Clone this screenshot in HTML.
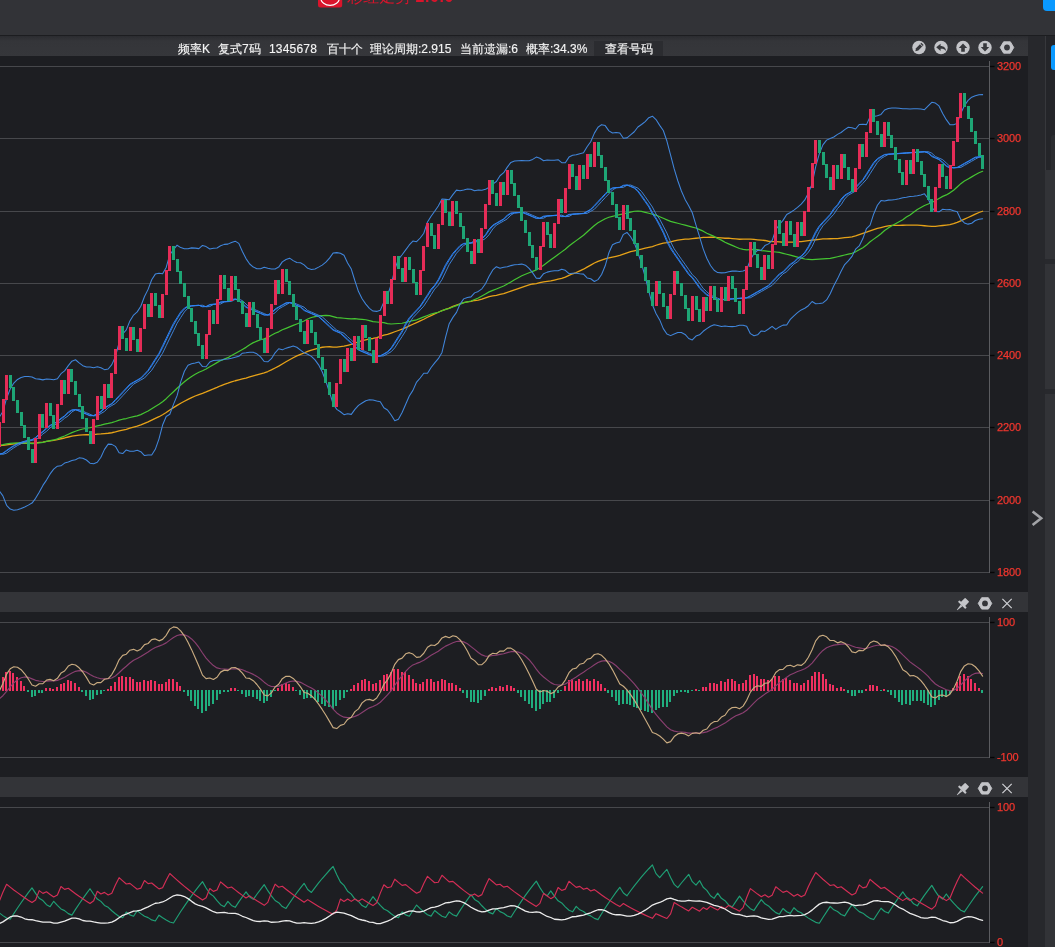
<!DOCTYPE html>
<html><head><meta charset="utf-8"><title>K</title>
<style>
html,body{margin:0;padding:0;width:1055px;height:947px;overflow:hidden;background:#1d1e22;font-family:"Liberation Sans",sans-serif;}
div{position:absolute;box-sizing:border-box}
#top{left:0;top:0;width:1055px;height:35px;background:#323337}
#topline{left:0;top:35px;width:1055px;height:1px;background:#1c1d20}
#tool{left:0;top:36px;width:1028px;height:20px;background:linear-gradient(to bottom,#2b2c30 0px,#343539 5px,#36373b 20px)}
.hd{left:0;width:1028px;height:20px;background:#333438}
#col{left:1028px;top:36px;width:17px;height:911px;background:#27282c}
#side{left:1045px;top:36px;width:10px;height:911px;background:#323337}
#sidetop{left:1045px;top:36px;width:10px;height:134px;background:#242529;border-left:1px solid #37383c}
#sidebox{left:1051px;top:135px;width:8px;height:35px;background:#2b2c30;border-radius:3px 0 0 0}
.sep{left:1045px;width:10px;height:5px;background:#28292d}
.blue{background:#0a99ff}
.t{color:#f4f4f4;-webkit-text-stroke:0.15px #f4f4f4;font-size:12px;line-height:14px;top:42px;white-space:nowrap;will-change:transform}
.ax{color:#f0362e;-webkit-text-stroke:0.25px #f0362e;font-size:11px;line-height:12px;left:996.8px;white-space:nowrap;letter-spacing:-0.15px;will-change:transform}
#btn{left:594px;top:41px;width:69px;height:15px;background:#2b2c30}
#brand{will-change:transform;left:347px;top:-12px;color:#d9142b;font-size:16px;line-height:18px;white-space:nowrap}
svg{position:absolute;left:0;top:0}
</style></head><body>
<div id="top"></div><div id="topline"></div><div id="tool"></div>
<div class="hd" style="top:592px"></div><div class="hd" style="top:777px"></div>
<div id="col"></div><div id="side"></div><div id="sidetop"></div><div id="sidebox"></div>
<div class="sep" style="top:259px"></div><div class="sep" style="top:389px"></div>
<div class="blue" style="left:1043px;top:-4px;width:16px;height:15px;border-radius:4px"></div>
<div class="blue" style="left:1051px;top:45px;width:8px;height:25px;border-radius:3px"></div>
<div id="btn"></div>
<div id="brand">彩红走势 <b style="letter-spacing:0.6px">2.0.0</b></div>
<div class="t" style="left:178px">频率K</div>
<div class="t" style="left:217.8px">复式7码</div>
<div class="t" style="left:269px;letter-spacing:0.2px">1345678</div>
<div class="t" style="left:327px">百十个</div>
<div class="t" style="left:370px">理论周期:2.915</div>
<div class="t" style="left:460px">当前遗漏:6</div>
<div class="t" style="left:526px">概率:34.3%</div>
<div class="t" style="left:605px">查看号码</div>
<div class="ax" style="top:60px">3200</div>
<div class="ax" style="top:132px">3000</div>
<div class="ax" style="top:205px">2800</div>
<div class="ax" style="top:277px">2600</div>
<div class="ax" style="top:349px">2400</div>
<div class="ax" style="top:421px">2200</div>
<div class="ax" style="top:494px">2000</div>
<div class="ax" style="top:566px">1800</div>
<div class="ax" style="top:616px">100</div>
<div class="ax" style="top:751px">-100</div>
<div class="ax" style="top:801px">100</div>
<div class="ax" style="top:936px">0</div>
<svg width="1055" height="947" viewBox="0 0 1055 947">
<rect x="0" y="66" width="990" height="1" fill="#47484c"/>
<rect x="990" y="65.8" width="4.5" height="1.4" fill="#050506"/>
<rect x="0" y="138" width="990" height="1" fill="#47484c"/>
<rect x="990" y="137.8" width="4.5" height="1.4" fill="#050506"/>
<rect x="0" y="211" width="990" height="1" fill="#47484c"/>
<rect x="990" y="210.8" width="4.5" height="1.4" fill="#050506"/>
<rect x="0" y="283" width="990" height="1" fill="#47484c"/>
<rect x="990" y="282.8" width="4.5" height="1.4" fill="#050506"/>
<rect x="0" y="355" width="990" height="1" fill="#47484c"/>
<rect x="990" y="354.8" width="4.5" height="1.4" fill="#050506"/>
<rect x="0" y="427" width="990" height="1" fill="#47484c"/>
<rect x="990" y="426.8" width="4.5" height="1.4" fill="#050506"/>
<rect x="0" y="500" width="990" height="1" fill="#47484c"/>
<rect x="990" y="499.8" width="4.5" height="1.4" fill="#050506"/>
<rect x="0" y="572" width="990" height="1" fill="#47484c"/>
<rect x="990" y="571.8" width="4.5" height="1.4" fill="#050506"/>
<rect x="989" y="61" width="1" height="512" fill="#5b5c60"/>
<polyline points="-0.7,445.68 2.9,445.42 6.6,444.85 10.2,444.36 13.8,443.95 17.5,443.63 21.1,443.39 24.7,443.24 28.3,443.19 32.0,443.23 35.6,442.98 39.2,442.44 42.9,442.03 46.5,441.33 50.1,440.77 53.7,440.35 57.4,439.67 61.0,438.75 64.6,437.99 68.3,437.00 71.9,436.19 75.5,435.55 79.1,435.09 82.8,434.80 86.4,434.68 90.0,434.74 93.7,434.58 97.3,434.19 100.9,433.97 104.5,433.53 108.2,433.25 111.8,432.74 115.4,431.98 119.1,430.95 122.7,430.06 126.3,429.27 129.9,428.17 133.6,427.15 137.2,426.22 140.8,424.95 144.5,423.37 148.1,421.87 151.7,420.06 155.3,418.34 159.0,416.71 162.6,414.79 166.2,412.57 169.8,410.06 173.5,407.67 177.1,405.41 180.7,403.26 184.4,401.24 188.0,399.34 191.6,397.59 195.2,395.99 198.9,394.56 202.5,393.33 206.1,391.91 209.8,390.32 213.4,388.95 217.0,387.44 220.6,385.77 224.3,384.37 227.9,383.21 231.5,381.88 235.2,380.75 238.8,379.77 242.4,378.91 246.0,378.12 249.7,376.98 253.3,375.87 256.9,374.81 260.6,373.79 264.2,372.83 267.8,371.53 271.4,369.92 275.1,368.00 278.7,366.16 282.3,363.97 286.0,361.81 289.6,359.70 293.2,357.73 296.8,355.95 300.5,354.38 304.1,353.00 307.7,351.44 311.4,350.13 315.0,349.04 318.6,348.11 322.2,347.25 325.9,346.80 329.5,346.74 333.1,347.09 336.8,347.04 340.4,346.59 344.0,346.13 347.6,345.28 351.3,344.42 354.9,343.17 358.5,341.91 362.1,340.65 365.8,339.80 369.4,338.94 373.0,338.49 376.7,337.63 380.3,336.38 383.9,335.12 387.5,334.26 391.2,333.01 394.8,331.75 398.4,330.49 402.1,329.24 405.7,327.58 409.3,325.92 412.9,324.26 416.6,322.60 420.2,320.94 423.8,319.28 427.5,317.22 431.1,315.57 434.7,313.91 438.3,312.25 442.0,310.59 445.6,309.33 449.2,308.08 452.9,306.42 456.5,305.16 460.1,303.90 463.7,302.65 467.4,301.79 471.0,301.34 474.6,300.48 478.3,300.03 481.9,299.17 485.5,297.92 489.1,296.66 492.8,295.80 496.4,295.35 500.0,294.49 503.7,293.64 507.3,292.38 510.9,291.12 514.5,289.87 518.2,288.61 521.8,287.35 525.4,286.10 529.1,284.84 532.7,283.98 536.3,283.53 539.9,282.68 543.6,281.82 547.2,281.37 550.8,280.91 554.4,280.06 558.1,279.20 561.7,278.35 565.3,277.09 569.0,275.43 572.6,273.77 576.2,272.52 579.8,270.86 583.5,269.20 587.1,267.14 590.7,265.08 594.4,263.02 598.0,261.36 601.6,260.10 605.2,258.85 608.9,257.99 612.5,257.13 616.1,256.28 619.8,255.42 623.4,254.17 627.0,252.91 630.6,251.65 634.3,250.80 637.9,249.94 641.5,249.09 645.2,248.23 648.8,247.38 652.4,246.52 656.0,245.26 659.7,244.01 663.3,243.15 666.9,242.70 670.6,241.84 674.2,240.99 677.8,240.13 681.4,239.68 685.1,239.22 688.7,239.17 692.3,238.72 696.0,238.26 699.6,237.81 703.2,237.36 706.8,237.30 710.5,237.25 714.1,237.20 717.7,237.55 721.4,237.90 725.0,238.25 728.6,238.20 732.2,238.54 735.9,238.89 739.5,239.24 743.1,239.19 746.7,239.14 750.4,239.09 754.0,239.44 757.6,239.79 761.3,240.14 764.9,240.48 768.5,241.24 772.1,241.58 775.8,241.53 779.4,241.88 783.0,242.23 786.7,242.18 790.3,242.13 793.9,242.07 797.5,241.62 801.2,241.57 804.8,241.11 808.4,240.66 812.1,240.21 815.7,239.75 819.3,239.30 822.9,238.85 826.6,238.79 830.2,238.74 833.8,238.69 837.5,238.64 841.1,238.18 844.7,237.73 848.3,237.28 852.0,236.82 855.6,235.97 859.2,234.71 862.9,233.45 866.5,232.20 870.1,230.94 873.7,229.68 877.4,228.42 881.0,227.57 884.6,226.71 888.3,225.86 891.9,225.40 895.5,225.35 899.1,225.30 902.8,225.25 906.4,225.20 910.0,225.14 913.6,225.09 917.3,225.04 920.9,225.39 924.5,225.74 928.2,226.09 931.8,226.44 935.4,226.38 939.0,225.93 942.7,225.48 946.3,225.02 949.9,224.57 953.6,223.71 957.2,222.46 960.8,220.80 964.4,219.14 968.1,217.48 971.7,215.82 975.3,214.16 979.0,212.51 982.6,211.25" fill="none" stroke="#e6a218" stroke-width="1.3" stroke-linejoin="round" stroke-linecap="round" opacity="1"/>
<polyline points="-0.7,444.97 2.9,444.63 6.6,443.92 10.2,443.41 13.8,443.10 17.5,442.94 21.1,442.93 24.7,443.04 28.3,443.26 32.0,443.61 35.6,443.46 39.2,442.85 42.9,442.36 46.5,441.41 50.1,440.61 53.7,439.96 57.4,438.86 61.0,437.34 64.6,435.99 68.3,434.22 71.9,432.64 75.5,431.23 79.1,430.02 82.8,429.02 86.4,428.25 90.0,427.75 93.7,426.94 97.3,425.84 100.9,425.07 104.5,424.06 108.2,423.42 111.8,422.56 115.4,421.48 119.1,420.17 122.7,419.21 126.3,418.54 129.9,417.50 133.6,416.63 137.2,415.87 140.8,414.59 144.5,412.76 148.1,410.99 151.7,408.68 155.3,406.47 159.0,404.34 162.6,401.74 166.2,398.69 169.8,395.16 173.5,391.70 177.1,388.29 180.7,384.95 184.4,381.81 188.0,378.97 191.6,376.44 195.2,374.20 198.9,372.29 202.5,370.74 206.1,368.94 209.8,366.76 213.4,364.70 217.0,362.64 220.6,360.58 224.3,359.12 227.9,357.66 231.5,355.60 235.2,353.54 238.8,351.48 242.4,349.42 246.0,347.36 249.7,344.70 253.3,342.64 256.9,341.18 260.6,339.72 264.2,338.87 267.8,337.41 271.4,335.35 275.1,333.29 278.7,331.83 282.3,329.77 286.0,328.32 289.6,326.86 293.2,325.40 296.8,323.94 300.5,322.48 304.1,321.03 307.7,318.97 311.4,317.51 315.0,316.65 318.6,315.80 322.2,315.55 325.9,315.29 329.5,315.64 333.1,316.59 336.8,317.55 340.4,317.89 344.0,318.24 347.6,318.59 351.3,318.94 354.9,318.69 358.5,319.04 362.1,319.39 365.8,319.74 369.4,320.69 373.0,321.64 376.7,321.99 380.3,322.34 383.9,322.69 387.5,323.64 391.2,323.99 394.8,323.74 398.4,323.48 402.1,323.23 405.7,322.38 409.3,321.52 412.9,320.67 416.6,319.81 420.2,318.35 423.8,316.89 427.5,315.44 431.1,313.98 434.7,313.12 438.3,312.27 442.0,310.81 445.6,309.35 449.2,308.50 452.9,307.04 456.5,305.58 460.1,304.12 463.7,302.67 467.4,301.81 471.0,300.96 474.6,299.50 478.3,298.04 481.9,295.98 485.5,293.92 489.1,291.86 492.8,290.40 496.4,288.94 500.0,287.49 503.7,286.03 507.3,283.97 510.9,281.91 514.5,279.85 518.2,277.79 521.8,275.73 525.4,274.27 529.1,272.81 532.7,271.35 536.3,269.90 539.9,267.84 543.6,265.17 547.2,262.51 550.8,259.85 554.4,257.19 558.1,254.52 561.7,251.86 565.3,249.20 569.0,245.93 572.6,243.27 576.2,240.61 579.8,237.95 583.5,235.28 587.1,232.02 590.7,228.75 594.4,225.49 598.0,222.83 601.6,220.77 605.2,218.71 608.9,217.25 612.5,216.39 616.1,215.54 619.8,214.68 623.4,213.83 627.0,212.97 630.6,212.12 634.3,211.26 637.9,211.01 641.5,211.36 645.2,212.31 648.8,213.26 652.4,214.21 656.0,215.16 659.7,216.72 663.3,218.27 666.9,219.83 670.6,221.38 674.2,222.33 677.8,223.28 681.4,224.24 685.1,225.19 688.7,226.14 692.3,227.09 696.0,228.04 699.6,229.60 703.2,231.15 706.8,233.31 710.5,234.86 714.1,236.42 717.7,238.57 721.4,240.13 725.0,242.28 728.6,243.84 732.2,245.39 735.9,246.95 739.5,248.50 743.1,249.45 746.7,249.80 750.4,249.55 754.0,249.30 757.6,249.64 761.3,250.60 764.9,250.95 768.5,251.30 772.1,251.64 775.8,251.99 779.4,252.34 783.0,253.30 786.7,254.25 790.3,255.20 793.9,256.15 797.5,257.10 801.2,258.05 804.8,259.01 808.4,259.36 812.1,259.70 815.7,259.45 819.3,259.20 822.9,258.95 826.6,258.69 830.2,258.44 833.8,257.58 837.5,256.73 841.1,255.87 844.7,255.02 848.3,254.16 852.0,253.31 855.6,251.85 859.2,249.79 862.9,247.73 866.5,245.07 870.1,241.80 873.7,239.14 877.4,236.48 881.0,233.81 884.6,230.55 888.3,227.89 891.9,225.83 895.5,223.77 899.1,221.71 902.8,219.65 906.4,216.98 910.0,214.92 913.6,212.26 917.3,209.60 920.9,207.54 924.5,205.48 928.2,204.02 931.8,202.56 935.4,200.50 939.0,198.44 942.7,196.38 946.3,194.92 949.9,192.86 953.6,190.20 957.2,186.94 960.8,183.67 964.4,181.01 968.1,178.95 971.7,176.89 975.3,174.83 979.0,172.77 982.6,171.31" fill="none" stroke="#45c532" stroke-width="1.2" stroke-linejoin="round" stroke-linecap="round" opacity="1"/>
<polyline points="-0.7,417.21 2.9,411.58 6.6,398.19 10.2,389.05 13.8,383.10 17.5,379.44 21.1,377.43 24.7,376.57 28.3,376.49 32.0,376.99 35.6,378.78 39.2,379.12 42.9,379.87 46.5,379.06 50.1,379.15 53.7,379.73 57.4,378.76 61.0,373.68 64.6,370.89 68.3,365.67 71.9,361.18 75.5,359.75 79.1,362.94 82.8,365.69 86.4,367.00 90.0,366.90 93.7,367.68 97.3,366.83 100.9,367.67 104.5,369.66 108.2,369.00 111.8,364.63 115.4,356.72 119.1,342.51 122.7,334.02 126.3,329.92 129.9,320.91 133.6,315.04 137.2,311.90 140.8,306.27 144.5,296.51 148.1,289.37 151.7,279.78 155.3,274.11 159.0,273.25 162.6,273.84 166.2,267.44 169.8,254.70 173.5,249.63 177.1,245.20 180.7,247.59 184.4,248.70 188.0,248.72 191.6,247.87 195.2,248.14 198.9,248.64 202.5,245.45 206.1,246.61 209.8,249.03 213.4,248.24 217.0,247.94 220.6,245.73 224.3,244.37 227.9,244.13 231.5,242.46 235.2,241.16 238.8,243.38 242.4,251.50 246.0,258.58 249.7,264.00 253.3,267.10 256.9,268.66 260.6,268.66 264.2,267.26 267.8,268.24 271.4,269.03 275.1,268.97 278.7,267.09 282.3,261.87 286.0,259.47 289.6,258.17 293.2,260.62 296.8,262.44 300.5,262.69 304.1,264.87 307.7,268.36 311.4,269.40 315.0,268.93 318.6,267.15 322.2,265.09 325.9,262.21 329.5,258.09 333.1,253.10 336.8,252.64 340.4,253.33 344.0,255.33 347.6,262.92 351.3,269.07 354.9,280.77 358.5,291.55 362.1,298.75 365.8,304.11 369.4,308.29 373.0,311.09 376.7,311.39 380.3,310.27 383.9,301.86 387.5,295.48 391.2,284.53 394.8,269.28 398.4,259.39 402.1,254.75 405.7,249.91 409.3,244.94 412.9,241.10 416.6,241.67 420.2,238.00 423.8,233.23 427.5,221.93 431.1,216.25 434.7,211.30 438.3,205.99 442.0,199.05 445.6,199.37 449.2,199.69 452.9,194.68 456.5,190.14 460.1,190.78 463.7,189.96 467.4,188.99 471.0,189.16 474.6,190.84 478.3,189.96 481.9,190.29 485.5,189.35 489.1,187.26 492.8,184.09 496.4,181.48 500.0,175.73 503.7,172.71 507.3,167.16 510.9,162.43 514.5,160.98 518.2,160.67 521.8,160.61 525.4,160.83 529.1,160.69 532.7,159.40 536.3,157.12 539.9,158.27 543.6,160.69 547.2,159.91 550.8,160.26 554.4,160.19 558.1,159.69 561.7,162.61 565.3,162.77 569.0,157.09 572.6,155.33 576.2,154.69 579.8,153.66 583.5,152.84 587.1,146.73 590.7,141.78 594.4,133.14 598.0,127.22 601.6,124.65 605.2,125.60 608.9,130.91 612.5,133.05 616.1,132.47 619.8,133.03 623.4,138.27 627.0,137.86 630.6,134.85 634.3,131.77 637.9,127.04 641.5,124.53 645.2,121.58 648.8,117.66 652.4,116.21 656.0,119.55 659.7,125.36 663.3,130.54 666.9,141.01 670.6,155.10 674.2,168.96 677.8,180.74 681.4,191.00 685.1,199.41 688.7,205.69 692.3,212.76 696.0,225.19 699.6,236.79 703.2,248.87 706.8,258.27 710.5,265.53 714.1,270.21 717.7,272.60 721.4,272.87 725.0,272.72 728.6,271.69 732.2,271.14 735.9,271.05 739.5,271.44 743.1,270.95 746.7,269.60 750.4,259.77 754.0,253.52 757.6,250.38 761.3,250.13 764.9,245.56 768.5,243.85 772.1,240.56 775.8,229.76 779.4,224.51 783.0,220.40 786.7,214.57 790.3,212.51 793.9,210.10 797.5,207.41 801.2,204.16 804.8,199.89 808.4,192.89 812.1,183.97 815.7,166.71 819.3,153.84 822.9,144.89 826.6,140.14 830.2,138.58 833.8,137.05 837.5,134.38 841.1,132.51 844.7,129.57 848.3,127.28 852.0,127.71 855.6,129.02 859.2,124.46 862.9,124.15 866.5,124.64 870.1,116.64 873.7,116.55 877.4,115.66 881.0,114.39 884.6,109.98 888.3,108.44 891.9,108.09 895.5,108.02 899.1,108.23 902.8,108.73 906.4,108.70 910.0,108.96 913.6,108.69 917.3,108.71 920.9,109.03 924.5,109.66 928.2,105.99 931.8,102.31 935.4,103.09 939.0,105.90 942.7,113.41 946.3,119.65 949.9,124.67 953.6,124.75 957.2,123.38 960.8,113.34 964.4,105.68 968.1,100.41 971.7,97.16 975.3,95.81 979.0,94.67 982.6,94.63" fill="none" stroke="#4086dc" stroke-width="1.05" stroke-linejoin="round" stroke-linecap="round" opacity="1"/>
<polyline points="-0.7,491.01 2.9,495.87 6.6,505.27 10.2,509.10 13.8,510.27 17.5,509.81 21.1,508.52 24.7,506.91 28.3,505.10 32.0,503.06 35.6,498.31 39.2,492.21 42.9,485.38 46.5,480.10 50.1,473.92 53.7,469.14 57.4,466.19 61.0,465.85 64.6,463.12 68.3,462.05 71.9,460.61 75.5,459.73 79.1,457.84 82.8,458.20 86.4,459.99 90.0,463.21 93.7,463.73 97.3,462.26 100.9,457.30 104.5,449.39 108.2,444.11 111.8,444.36 115.4,446.35 119.1,452.83 122.7,453.58 126.3,449.95 129.9,451.22 133.6,451.16 137.2,450.19 140.8,451.70 144.5,455.53 148.1,454.93 151.7,454.98 155.3,449.30 159.0,438.81 162.6,425.06 166.2,416.50 169.8,414.28 173.5,404.39 177.1,395.66 180.7,381.92 184.4,371.27 188.0,365.32 191.6,363.86 195.2,363.09 198.9,362.08 202.5,366.56 206.1,366.71 209.8,361.98 213.4,360.45 217.0,360.25 220.6,360.14 224.3,359.19 227.9,358.92 231.5,358.28 235.2,357.27 238.8,356.35 242.4,353.15 246.0,352.79 249.7,352.29 253.3,352.29 256.9,353.84 260.6,356.95 264.2,361.46 267.8,361.78 271.4,358.67 275.1,352.81 278.7,348.76 282.3,349.86 286.0,348.14 289.6,347.13 293.2,345.97 296.8,347.26 300.5,350.12 304.1,352.86 307.7,354.28 311.4,356.36 315.0,359.93 318.6,364.82 322.2,371.79 325.9,381.39 329.5,392.24 333.1,403.95 336.8,409.33 340.4,411.74 344.0,414.66 347.6,413.79 351.3,414.36 354.9,409.38 358.5,405.33 362.1,403.05 365.8,400.80 369.4,399.73 373.0,400.03 376.7,401.03 380.3,401.65 383.9,407.74 387.5,410.00 391.2,415.03 394.8,420.73 398.4,419.27 402.1,412.57 405.7,404.25 409.3,396.07 412.9,390.36 416.6,382.06 420.2,377.99 423.8,373.22 427.5,373.18 431.1,367.50 434.7,362.92 438.3,358.69 442.0,352.46 445.6,337.18 449.2,323.71 452.9,317.37 456.5,312.37 460.1,303.99 463.7,298.88 467.4,297.54 471.0,296.87 474.6,292.87 478.3,291.44 481.9,288.80 485.5,283.80 489.1,276.35 492.8,269.98 496.4,266.67 500.0,268.30 503.7,267.19 507.3,266.82 510.9,265.62 514.5,264.76 518.2,264.56 521.8,264.12 525.4,265.20 529.1,268.45 532.7,272.85 536.3,278.23 539.9,278.38 543.6,273.65 547.2,272.12 550.8,271.26 554.4,270.82 558.1,270.82 561.7,269.20 565.3,270.34 569.0,273.70 572.6,273.16 576.2,273.29 579.8,273.82 583.5,274.13 587.1,277.92 590.7,278.75 594.4,281.47 598.0,279.65 601.6,274.49 605.2,265.80 608.9,252.76 612.5,244.69 616.1,242.96 619.8,241.89 623.4,234.34 627.0,232.43 630.6,236.74 634.3,242.94 637.9,252.58 641.5,263.62 645.2,276.91 648.8,291.17 652.4,304.76 656.0,313.57 659.7,319.90 663.3,328.67 666.9,333.95 670.6,335.62 674.2,333.91 677.8,332.47 681.4,332.54 685.1,334.47 688.7,338.52 692.3,339.98 696.0,336.09 699.6,334.82 703.2,331.28 706.8,328.59 710.5,326.25 714.1,324.68 717.7,325.40 721.4,326.43 725.0,326.07 728.6,326.59 732.2,326.64 735.9,326.22 739.5,325.33 743.1,325.31 746.7,326.15 750.4,333.67 754.0,335.81 757.6,334.82 761.3,330.95 764.9,331.40 768.5,328.99 772.1,326.35 775.8,329.42 779.4,326.93 783.0,325.12 786.7,325.02 790.3,319.35 793.9,315.82 797.5,312.59 801.2,309.91 804.8,308.25 808.4,305.71 812.1,301.48 815.7,303.77 819.3,303.49 822.9,302.90 826.6,299.91 830.2,293.73 833.8,285.72 837.5,278.85 841.1,271.18 844.7,264.58 848.3,260.95 852.0,256.39 855.6,249.16 859.2,245.98 862.9,238.56 866.5,228.53 870.1,225.17 873.7,213.92 877.4,205.26 881.0,200.60 884.6,200.90 888.3,200.12 891.9,199.97 895.5,199.53 899.1,198.82 902.8,197.81 906.4,197.33 910.0,196.56 913.6,196.33 917.3,195.81 920.9,194.98 924.5,193.85 928.2,198.81 931.8,207.41 935.4,211.55 939.0,211.85 942.7,209.25 946.3,209.73 949.9,209.62 953.6,210.85 957.2,211.71 960.8,219.44 964.4,222.98 968.1,224.13 971.7,223.26 975.3,220.49 979.0,219.32 982.6,218.85" fill="none" stroke="#4086dc" stroke-width="1.05" stroke-linejoin="round" stroke-linecap="round" opacity="1"/>
<polyline points="-0.7,453.89 2.9,454.33 6.6,453.13 10.2,450.34 13.8,447.81 17.5,445.56 21.1,443.69 24.7,442.27 28.3,441.21 32.0,440.38 35.6,439.68 39.2,437.41 42.9,433.92 46.5,431.33 50.1,427.84 53.7,425.24 57.4,423.64 61.0,421.31 64.6,418.22 68.3,415.79 71.9,411.93 75.5,409.87 79.1,409.61 82.8,411.17 86.4,412.72 90.0,414.28 93.7,415.83 97.3,415.58 100.9,413.52 104.5,411.46 108.2,407.59 111.8,405.53 115.4,403.47 119.1,399.60 122.7,395.73 126.3,391.87 129.9,388.00 133.6,384.13 137.2,382.07 140.8,380.01 144.5,377.95 148.1,374.08 151.7,370.22 155.3,364.54 159.0,358.87 162.6,353.19 166.2,345.71 169.8,338.23 173.5,330.75 177.1,323.27 180.7,317.59 184.4,311.92 188.0,308.05 191.6,305.99 195.2,305.74 198.9,305.49 202.5,305.23 206.1,306.79 209.8,306.53 213.4,304.47 217.0,304.22 220.6,303.97 224.3,301.91 227.9,301.65 231.5,301.40 235.2,299.34 238.8,299.09 242.4,300.64 246.0,304.00 249.7,307.36 253.3,308.92 256.9,310.47 260.6,312.03 264.2,313.58 267.8,315.14 271.4,314.88 275.1,312.82 278.7,308.96 282.3,306.89 286.0,304.83 289.6,302.77 293.2,302.52 296.8,304.08 300.5,305.63 304.1,307.18 307.7,310.55 311.4,312.10 315.0,313.65 318.6,315.21 322.2,316.76 325.9,320.12 329.5,323.48 333.1,326.85 336.8,330.21 340.4,331.76 344.0,333.32 347.6,336.68 351.3,340.04 354.9,343.40 358.5,346.76 362.1,350.12 365.8,351.68 369.4,353.23 373.0,354.78 376.7,356.34 380.3,356.09 383.9,355.83 387.5,353.77 391.2,351.71 394.8,347.84 398.4,342.17 402.1,336.50 405.7,330.82 409.3,323.34 412.9,317.67 416.6,313.80 420.2,309.93 423.8,306.06 427.5,300.39 431.1,294.71 434.7,289.04 438.3,285.17 442.0,279.50 445.6,272.02 449.2,264.54 452.9,258.86 456.5,253.19 460.1,249.32 463.7,245.45 467.4,243.39 471.0,243.14 474.6,242.89 478.3,240.83 481.9,240.57 485.5,238.51 489.1,234.65 492.8,228.97 496.4,225.10 500.0,223.04 503.7,220.98 507.3,218.92 510.9,215.06 514.5,213.00 518.2,212.74 521.8,212.49 525.4,212.24 529.1,213.79 532.7,215.35 536.3,216.90 539.9,218.45 543.6,218.20 547.2,216.14 550.8,215.89 554.4,215.63 558.1,215.38 561.7,215.13 565.3,216.68 569.0,216.43 572.6,214.37 576.2,214.12 579.8,213.86 583.5,213.61 587.1,213.36 590.7,211.30 594.4,209.24 598.0,205.37 601.6,201.50 605.2,197.64 608.9,193.77 612.5,189.90 616.1,187.84 619.8,187.59 623.4,187.33 627.0,185.27 630.6,185.02 634.3,186.58 637.9,188.13 641.5,191.49 645.2,196.66 648.8,201.83 652.4,207.00 656.0,213.97 659.7,219.14 663.3,226.12 666.9,233.09 670.6,241.87 674.2,248.85 677.8,254.02 681.4,259.19 685.1,264.35 688.7,269.52 692.3,274.69 696.0,278.05 699.6,283.22 703.2,288.39 706.8,291.75 710.5,295.11 714.1,296.67 717.7,298.22 721.4,299.77 725.0,299.52 728.6,299.27 732.2,299.02 735.9,298.76 739.5,298.51 743.1,298.26 746.7,298.00 750.4,297.75 754.0,295.69 757.6,293.63 761.3,291.57 764.9,289.51 768.5,287.45 772.1,285.39 775.8,281.52 779.4,277.66 783.0,273.79 786.7,271.73 790.3,267.86 793.9,263.99 797.5,261.93 801.2,258.07 804.8,256.01 808.4,252.14 812.1,246.46 815.7,238.98 819.3,231.50 822.9,225.83 826.6,221.96 830.2,218.09 833.8,214.22 837.5,208.55 841.1,204.68 844.7,199.01 848.3,195.14 852.0,193.08 855.6,191.02 859.2,187.15 862.9,183.29 866.5,179.42 870.1,173.74 873.7,168.07 877.4,162.40 881.0,158.53 884.6,156.47 888.3,154.41 891.9,154.16 895.5,153.90 899.1,153.65 902.8,153.40 906.4,153.14 910.0,152.89 913.6,152.64 917.3,152.38 920.9,152.13 924.5,151.88 928.2,151.63 931.8,153.18 935.4,156.54 939.0,158.09 942.7,159.65 946.3,163.01 949.9,166.37 953.6,167.93 957.2,167.67 960.8,167.42 964.4,165.36 968.1,163.30 971.7,161.24 975.3,159.18 979.0,157.12 982.6,156.87" fill="none" stroke="#4086dc" stroke-width="0.95" stroke-linejoin="round" stroke-linecap="round" opacity="1"/>
<polyline points="-0.7,454.22 2.9,453.43 6.6,451.03 10.2,448.44 13.8,446.12 17.5,444.16 21.1,442.62 24.7,441.47 28.3,440.59 32.0,439.85 35.6,437.98 39.2,434.79 42.9,431.98 46.5,428.71 50.1,425.89 53.7,424.04 57.4,421.89 61.0,418.99 64.6,416.40 68.3,412.89 71.9,410.38 75.5,409.68 79.1,410.78 82.8,412.33 86.4,413.89 90.0,415.44 93.7,415.64 97.3,414.03 100.9,411.97 104.5,408.56 108.2,406.04 111.8,403.98 115.4,400.57 119.1,396.70 122.7,392.83 126.3,388.97 129.9,385.10 133.6,382.59 137.2,380.53 140.8,378.47 144.5,375.05 148.1,371.18 151.7,365.96 155.3,360.29 159.0,354.61 162.6,347.58 166.2,340.10 169.8,332.62 173.5,325.14 177.1,319.01 180.7,313.34 184.4,309.02 188.0,306.51 191.6,305.80 195.2,305.55 198.9,305.30 202.5,306.40 206.1,306.60 209.8,304.99 213.4,304.28 217.0,304.03 220.6,302.42 224.3,301.72 227.9,301.46 231.5,299.86 235.2,299.15 238.8,300.25 242.4,303.16 246.0,306.52 249.7,308.53 253.3,310.08 256.9,311.64 260.6,313.19 264.2,314.75 267.8,314.95 271.4,313.34 275.1,309.92 278.7,307.41 282.3,305.35 286.0,303.29 289.6,302.58 293.2,303.69 296.8,305.24 300.5,306.80 304.1,309.71 307.7,311.71 311.4,313.27 315.0,314.82 318.6,316.37 322.2,319.28 325.9,322.64 329.5,326.01 333.1,329.37 336.8,331.37 340.4,332.93 344.0,335.84 347.6,339.20 351.3,342.56 354.9,345.92 358.5,349.28 362.1,351.29 365.8,352.84 369.4,354.40 373.0,355.95 376.7,356.15 380.3,355.90 383.9,354.29 387.5,352.23 391.2,348.81 394.8,343.59 398.4,337.91 402.1,332.24 405.7,325.21 409.3,319.08 412.9,314.77 416.6,310.90 420.2,307.03 423.8,301.81 427.5,296.13 431.1,290.46 434.7,286.14 438.3,280.92 442.0,273.89 445.6,266.41 449.2,260.28 452.9,254.61 456.5,250.29 460.1,246.42 463.7,243.91 467.4,243.20 471.0,242.95 474.6,241.34 478.3,240.64 481.9,239.03 485.5,235.61 489.1,230.39 492.8,226.07 496.4,223.56 500.0,221.50 503.7,219.44 507.3,216.02 510.9,213.51 514.5,212.81 518.2,212.55 521.8,212.30 525.4,213.40 529.1,214.96 532.7,216.51 536.3,218.06 539.9,218.26 543.6,216.66 547.2,215.95 550.8,215.70 554.4,215.44 558.1,215.19 561.7,216.29 565.3,216.49 569.0,214.88 572.6,214.18 576.2,213.93 579.8,213.67 583.5,213.42 587.1,211.81 590.7,209.75 594.4,206.34 598.0,202.47 601.6,198.60 605.2,194.73 608.9,190.87 612.5,188.36 616.1,187.65 619.8,187.40 623.4,185.79 627.0,185.08 630.6,186.19 634.3,187.74 637.9,190.65 641.5,195.37 645.2,200.54 648.8,205.70 652.4,212.23 656.0,217.85 659.7,224.37 663.3,231.35 666.9,239.68 670.6,247.11 674.2,252.73 677.8,257.89 681.4,263.06 685.1,268.23 688.7,273.40 692.3,277.21 696.0,281.93 699.6,287.10 703.2,290.91 706.8,294.27 710.5,296.28 714.1,297.83 717.7,299.39 721.4,299.59 725.0,299.33 728.6,299.08 732.2,298.83 735.9,298.57 739.5,298.32 743.1,298.07 746.7,297.81 750.4,296.21 754.0,294.15 757.6,292.09 761.3,290.03 764.9,287.97 768.5,285.90 772.1,282.49 775.8,278.62 779.4,274.75 783.0,272.24 786.7,268.83 790.3,264.96 793.9,262.45 797.5,259.03 801.2,256.52 804.8,253.11 808.4,247.88 812.1,240.85 815.7,233.37 819.3,227.25 822.9,222.93 826.6,219.06 830.2,215.19 833.8,209.97 837.5,205.65 841.1,200.43 844.7,196.11 848.3,193.60 852.0,191.54 855.6,188.12 859.2,184.25 862.9,180.39 866.5,175.16 870.1,169.49 873.7,163.81 877.4,159.50 881.0,156.98 884.6,154.92 888.3,154.22 891.9,153.97 895.5,153.71 899.1,153.46 902.8,153.21 906.4,152.95 910.0,152.70 913.6,152.45 917.3,152.19 920.9,151.94 924.5,151.69 928.2,152.79 931.8,155.70 935.4,157.71 939.0,159.26 942.7,162.17 946.3,165.53 949.9,167.54 953.6,167.74 957.2,167.48 960.8,165.87 964.4,163.81 968.1,161.75 971.7,159.69 975.3,157.63 979.0,156.93 982.6,156.68" fill="none" stroke="#2e84f6" stroke-width="0.9" stroke-linejoin="round" stroke-linecap="round" opacity="1"/>
<polyline points="-0.7,454.33 2.9,453.13 6.6,450.34 10.2,447.81 13.8,445.56 17.5,443.69 21.1,442.27 24.7,441.21 28.3,440.38 32.0,439.68 35.6,437.41 39.2,433.92 42.9,431.33 46.5,427.84 50.1,425.24 53.7,423.64 57.4,421.31 61.0,418.22 64.6,415.79 68.3,411.93 71.9,409.87 75.5,409.61 79.1,411.17 82.8,412.72 86.4,414.28 90.0,415.83 93.7,415.58 97.3,413.52 100.9,411.46 104.5,407.59 108.2,405.53 111.8,403.47 115.4,399.60 119.1,395.73 122.7,391.87 126.3,388.00 129.9,384.13 133.6,382.07 137.2,380.01 140.8,377.95 144.5,374.08 148.1,370.22 151.7,364.54 155.3,358.87 159.0,353.19 162.6,345.71 166.2,338.23 169.8,330.75 173.5,323.27 177.1,317.59 180.7,311.92 184.4,308.05 188.0,305.99 191.6,305.74 195.2,305.49 198.9,305.23 202.5,306.79 206.1,306.53 209.8,304.47 213.4,304.22 217.0,303.97 220.6,301.91 224.3,301.65 227.9,301.40 231.5,299.34 235.2,299.09 238.8,300.64 242.4,304.00 246.0,307.36 249.7,308.92 253.3,310.47 256.9,312.03 260.6,313.58 264.2,315.14 267.8,314.88 271.4,312.82 275.1,308.96 278.7,306.89 282.3,304.83 286.0,302.77 289.6,302.52 293.2,304.08 296.8,305.63 300.5,307.18 304.1,310.55 307.7,312.10 311.4,313.65 315.0,315.21 318.6,316.76 322.2,320.12 325.9,323.48 329.5,326.85 333.1,330.21 336.8,331.76 340.4,333.32 344.0,336.68 347.6,340.04 351.3,343.40 354.9,346.76 358.5,350.12 362.1,351.68 365.8,353.23 369.4,354.78 373.0,356.34 376.7,356.09 380.3,355.83 383.9,353.77 387.5,351.71 391.2,347.84 394.8,342.17 398.4,336.50 402.1,330.82 405.7,323.34 409.3,317.67 412.9,313.80 416.6,309.93 420.2,306.06 423.8,300.39 427.5,294.71 431.1,289.04 434.7,285.17 438.3,279.50 442.0,272.02 445.6,264.54 449.2,258.86 452.9,253.19 456.5,249.32 460.1,245.45 463.7,243.39 467.4,243.14 471.0,242.89 474.6,240.83 478.3,240.57 481.9,238.51 485.5,234.65 489.1,228.97 492.8,225.10 496.4,223.04 500.0,220.98 503.7,218.92 507.3,215.06 510.9,213.00 514.5,212.74 518.2,212.49 521.8,212.24 525.4,213.79 529.1,215.35 532.7,216.90 536.3,218.45 539.9,218.20 543.6,216.14 547.2,215.89 550.8,215.63 554.4,215.38 558.1,215.13 561.7,216.68 565.3,216.43 569.0,214.37 572.6,214.12 576.2,213.86 579.8,213.61 583.5,213.36 587.1,211.30 590.7,209.24 594.4,205.37 598.0,201.50 601.6,197.64 605.2,193.77 608.9,189.90 612.5,187.84 616.1,187.59 619.8,187.33 623.4,185.27 627.0,185.02 630.6,186.58 634.3,188.13 637.9,191.49 641.5,196.66 645.2,201.83 648.8,207.00 652.4,213.97 656.0,219.14 659.7,226.12 663.3,233.09 666.9,241.87 670.6,248.85 674.2,254.02 677.8,259.19 681.4,264.35 685.1,269.52 688.7,274.69 692.3,278.05 696.0,283.22 699.6,288.39 703.2,291.75 706.8,295.11 710.5,296.67 714.1,298.22 717.7,299.77 721.4,299.52 725.0,299.27 728.6,299.02 732.2,298.76 735.9,298.51 739.5,298.26 743.1,298.00 746.7,297.75 750.4,295.69 754.0,293.63 757.6,291.57 761.3,289.51 764.9,287.45 768.5,285.39 772.1,281.52 775.8,277.66 779.4,273.79 783.0,271.73 786.7,267.86 790.3,263.99 793.9,261.93 797.5,258.07 801.2,256.01 804.8,252.14 808.4,246.46 812.1,238.98 815.7,231.50 819.3,225.83 822.9,221.96 826.6,218.09 830.2,214.22 833.8,208.55 837.5,204.68 841.1,199.01 844.7,195.14 848.3,193.08 852.0,191.02 855.6,187.15 859.2,183.29 862.9,179.42 866.5,173.74 870.1,168.07 873.7,162.40 877.4,158.53 881.0,156.47 884.6,154.41 888.3,154.16 891.9,153.90 895.5,153.65 899.1,153.40 902.8,153.14 906.4,152.89 910.0,152.64 913.6,152.38 917.3,152.13 920.9,151.88 924.5,151.63 928.2,153.18 931.8,156.54 935.4,158.09 939.0,159.65 942.7,163.01 946.3,166.37 949.9,167.93 953.6,167.67 957.2,167.42 960.8,165.36 964.4,163.30 968.1,161.24 971.7,159.18 975.3,157.12 979.0,156.87 982.6,156.61" fill="none" stroke="#2e84f6" stroke-width="0.95" stroke-linejoin="round" stroke-linecap="round" opacity="1"/>
<rect x="-2" y="422" width="3" height="25" fill="#e52c57"/>
<rect x="2" y="399" width="3" height="24" fill="#e52c57"/>
<rect x="5" y="375" width="3" height="25" fill="#e52c57"/>
<rect x="9" y="375" width="3" height="13" fill="#1ea575"/>
<rect x="12" y="387" width="3" height="14" fill="#1ea575"/>
<rect x="16" y="400" width="3" height="13" fill="#1ea575"/>
<rect x="20" y="412" width="3" height="14" fill="#1ea575"/>
<rect x="23" y="425" width="3" height="13" fill="#1ea575"/>
<rect x="27" y="437" width="3" height="13" fill="#1ea575"/>
<rect x="31" y="449" width="3" height="14" fill="#1ea575"/>
<rect x="34" y="438" width="3" height="25" fill="#e52c57"/>
<rect x="38" y="414" width="3" height="25" fill="#e52c57"/>
<rect x="41" y="414" width="3" height="14" fill="#1ea575"/>
<rect x="45" y="403" width="3" height="25" fill="#e52c57"/>
<rect x="49" y="403" width="3" height="13" fill="#1ea575"/>
<rect x="52" y="415" width="3" height="14" fill="#1ea575"/>
<rect x="56" y="404" width="3" height="25" fill="#e52c57"/>
<rect x="60" y="380" width="3" height="25" fill="#e52c57"/>
<rect x="63" y="380" width="3" height="14" fill="#1ea575"/>
<rect x="67" y="369" width="3" height="25" fill="#e52c57"/>
<rect x="70" y="369" width="3" height="13" fill="#1ea575"/>
<rect x="74" y="381" width="3" height="14" fill="#1ea575"/>
<rect x="78" y="394" width="3" height="13" fill="#1ea575"/>
<rect x="81" y="406" width="3" height="13" fill="#1ea575"/>
<rect x="85" y="418" width="3" height="14" fill="#1ea575"/>
<rect x="89" y="431" width="3" height="13" fill="#1ea575"/>
<rect x="92" y="419" width="3" height="25" fill="#e52c57"/>
<rect x="96" y="396" width="3" height="24" fill="#e52c57"/>
<rect x="100" y="396" width="3" height="13" fill="#1ea575"/>
<rect x="103" y="384" width="3" height="25" fill="#e52c57"/>
<rect x="107" y="384" width="3" height="14" fill="#1ea575"/>
<rect x="110" y="373" width="3" height="25" fill="#e52c57"/>
<rect x="114" y="349" width="3" height="25" fill="#e52c57"/>
<rect x="118" y="326" width="3" height="24" fill="#e52c57"/>
<rect x="121" y="326" width="3" height="13" fill="#1ea575"/>
<rect x="125" y="338" width="3" height="13" fill="#1ea575"/>
<rect x="129" y="327" width="3" height="24" fill="#e52c57"/>
<rect x="132" y="327" width="3" height="13" fill="#1ea575"/>
<rect x="136" y="339" width="3" height="13" fill="#1ea575"/>
<rect x="139" y="328" width="3" height="24" fill="#e52c57"/>
<rect x="143" y="304" width="3" height="25" fill="#e52c57"/>
<rect x="147" y="304" width="3" height="13" fill="#1ea575"/>
<rect x="150" y="293" width="3" height="24" fill="#e52c57"/>
<rect x="154" y="293" width="3" height="13" fill="#1ea575"/>
<rect x="158" y="305" width="3" height="13" fill="#1ea575"/>
<rect x="161" y="294" width="3" height="24" fill="#e52c57"/>
<rect x="165" y="270" width="3" height="25" fill="#e52c57"/>
<rect x="168" y="246" width="3" height="25" fill="#e52c57"/>
<rect x="172" y="246" width="3" height="14" fill="#1ea575"/>
<rect x="176" y="259" width="3" height="13" fill="#1ea575"/>
<rect x="179" y="271" width="3" height="13" fill="#1ea575"/>
<rect x="183" y="283" width="3" height="14" fill="#1ea575"/>
<rect x="187" y="296" width="3" height="13" fill="#1ea575"/>
<rect x="190" y="308" width="3" height="14" fill="#1ea575"/>
<rect x="194" y="321" width="3" height="13" fill="#1ea575"/>
<rect x="197" y="333" width="3" height="13" fill="#1ea575"/>
<rect x="201" y="345" width="3" height="14" fill="#1ea575"/>
<rect x="205" y="334" width="3" height="25" fill="#e52c57"/>
<rect x="208" y="310" width="3" height="25" fill="#e52c57"/>
<rect x="212" y="310" width="3" height="14" fill="#1ea575"/>
<rect x="216" y="299" width="3" height="25" fill="#e52c57"/>
<rect x="219" y="275" width="3" height="25" fill="#e52c57"/>
<rect x="223" y="275" width="3" height="14" fill="#1ea575"/>
<rect x="227" y="288" width="3" height="13" fill="#1ea575"/>
<rect x="230" y="276" width="3" height="25" fill="#e52c57"/>
<rect x="234" y="276" width="3" height="14" fill="#1ea575"/>
<rect x="237" y="289" width="3" height="13" fill="#1ea575"/>
<rect x="241" y="301" width="3" height="13" fill="#1ea575"/>
<rect x="245" y="313" width="3" height="14" fill="#1ea575"/>
<rect x="248" y="302" width="3" height="25" fill="#e52c57"/>
<rect x="252" y="302" width="3" height="13" fill="#1ea575"/>
<rect x="256" y="314" width="3" height="14" fill="#1ea575"/>
<rect x="259" y="327" width="3" height="13" fill="#1ea575"/>
<rect x="263" y="339" width="3" height="14" fill="#1ea575"/>
<rect x="266" y="328" width="3" height="25" fill="#e52c57"/>
<rect x="270" y="304" width="3" height="25" fill="#e52c57"/>
<rect x="274" y="280" width="3" height="25" fill="#e52c57"/>
<rect x="277" y="280" width="3" height="14" fill="#1ea575"/>
<rect x="281" y="269" width="3" height="25" fill="#e52c57"/>
<rect x="285" y="269" width="3" height="13" fill="#1ea575"/>
<rect x="288" y="281" width="3" height="14" fill="#1ea575"/>
<rect x="292" y="294" width="3" height="13" fill="#1ea575"/>
<rect x="295" y="306" width="3" height="14" fill="#1ea575"/>
<rect x="299" y="319" width="3" height="13" fill="#1ea575"/>
<rect x="303" y="331" width="3" height="13" fill="#1ea575"/>
<rect x="306" y="320" width="3" height="24" fill="#e52c57"/>
<rect x="310" y="320" width="3" height="13" fill="#1ea575"/>
<rect x="314" y="332" width="3" height="13" fill="#1ea575"/>
<rect x="317" y="344" width="3" height="14" fill="#1ea575"/>
<rect x="321" y="357" width="3" height="13" fill="#1ea575"/>
<rect x="324" y="369" width="3" height="14" fill="#1ea575"/>
<rect x="328" y="382" width="3" height="13" fill="#1ea575"/>
<rect x="332" y="394" width="3" height="13" fill="#1ea575"/>
<rect x="335" y="383" width="3" height="24" fill="#e52c57"/>
<rect x="339" y="359" width="3" height="25" fill="#e52c57"/>
<rect x="343" y="359" width="3" height="13" fill="#1ea575"/>
<rect x="346" y="348" width="3" height="24" fill="#e52c57"/>
<rect x="350" y="348" width="3" height="13" fill="#1ea575"/>
<rect x="353" y="336" width="3" height="25" fill="#e52c57"/>
<rect x="357" y="336" width="3" height="14" fill="#1ea575"/>
<rect x="361" y="325" width="3" height="25" fill="#e52c57"/>
<rect x="364" y="325" width="3" height="13" fill="#1ea575"/>
<rect x="368" y="337" width="3" height="14" fill="#1ea575"/>
<rect x="372" y="350" width="3" height="13" fill="#1ea575"/>
<rect x="375" y="338" width="3" height="25" fill="#e52c57"/>
<rect x="379" y="315" width="3" height="24" fill="#e52c57"/>
<rect x="383" y="291" width="3" height="25" fill="#e52c57"/>
<rect x="386" y="291" width="3" height="13" fill="#1ea575"/>
<rect x="390" y="279" width="3" height="25" fill="#e52c57"/>
<rect x="393" y="256" width="3" height="24" fill="#e52c57"/>
<rect x="397" y="256" width="3" height="13" fill="#1ea575"/>
<rect x="401" y="268" width="3" height="14" fill="#1ea575"/>
<rect x="404" y="257" width="3" height="25" fill="#e52c57"/>
<rect x="408" y="257" width="3" height="13" fill="#1ea575"/>
<rect x="412" y="269" width="3" height="14" fill="#1ea575"/>
<rect x="415" y="282" width="3" height="13" fill="#1ea575"/>
<rect x="419" y="270" width="3" height="25" fill="#e52c57"/>
<rect x="422" y="246" width="3" height="25" fill="#e52c57"/>
<rect x="426" y="223" width="3" height="24" fill="#e52c57"/>
<rect x="430" y="223" width="3" height="13" fill="#1ea575"/>
<rect x="433" y="235" width="3" height="14" fill="#1ea575"/>
<rect x="437" y="224" width="3" height="25" fill="#e52c57"/>
<rect x="441" y="200" width="3" height="25" fill="#e52c57"/>
<rect x="444" y="200" width="3" height="13" fill="#1ea575"/>
<rect x="448" y="212" width="3" height="14" fill="#1ea575"/>
<rect x="451" y="201" width="3" height="25" fill="#e52c57"/>
<rect x="455" y="201" width="3" height="13" fill="#1ea575"/>
<rect x="459" y="213" width="3" height="14" fill="#1ea575"/>
<rect x="462" y="226" width="3" height="13" fill="#1ea575"/>
<rect x="466" y="238" width="3" height="14" fill="#1ea575"/>
<rect x="470" y="251" width="3" height="13" fill="#1ea575"/>
<rect x="473" y="239" width="3" height="25" fill="#e52c57"/>
<rect x="477" y="239" width="3" height="14" fill="#1ea575"/>
<rect x="480" y="228" width="3" height="25" fill="#e52c57"/>
<rect x="484" y="204" width="3" height="25" fill="#e52c57"/>
<rect x="488" y="180" width="3" height="25" fill="#e52c57"/>
<rect x="491" y="180" width="3" height="14" fill="#1ea575"/>
<rect x="495" y="193" width="3" height="13" fill="#1ea575"/>
<rect x="499" y="182" width="3" height="24" fill="#e52c57"/>
<rect x="502" y="182" width="3" height="13" fill="#1ea575"/>
<rect x="506" y="170" width="3" height="25" fill="#e52c57"/>
<rect x="510" y="170" width="3" height="14" fill="#1ea575"/>
<rect x="513" y="183" width="3" height="13" fill="#1ea575"/>
<rect x="517" y="195" width="3" height="13" fill="#1ea575"/>
<rect x="520" y="207" width="3" height="14" fill="#1ea575"/>
<rect x="524" y="220" width="3" height="13" fill="#1ea575"/>
<rect x="528" y="232" width="3" height="14" fill="#1ea575"/>
<rect x="531" y="245" width="3" height="13" fill="#1ea575"/>
<rect x="535" y="257" width="3" height="13" fill="#1ea575"/>
<rect x="539" y="246" width="3" height="24" fill="#e52c57"/>
<rect x="542" y="222" width="3" height="25" fill="#e52c57"/>
<rect x="546" y="222" width="3" height="13" fill="#1ea575"/>
<rect x="549" y="234" width="3" height="14" fill="#1ea575"/>
<rect x="553" y="223" width="3" height="25" fill="#e52c57"/>
<rect x="557" y="199" width="3" height="25" fill="#e52c57"/>
<rect x="560" y="199" width="3" height="14" fill="#1ea575"/>
<rect x="564" y="188" width="3" height="25" fill="#e52c57"/>
<rect x="568" y="164" width="3" height="25" fill="#e52c57"/>
<rect x="571" y="164" width="3" height="13" fill="#1ea575"/>
<rect x="575" y="176" width="3" height="14" fill="#1ea575"/>
<rect x="578" y="165" width="3" height="25" fill="#e52c57"/>
<rect x="582" y="165" width="3" height="14" fill="#1ea575"/>
<rect x="586" y="154" width="3" height="25" fill="#e52c57"/>
<rect x="589" y="154" width="3" height="13" fill="#1ea575"/>
<rect x="593" y="142" width="3" height="25" fill="#e52c57"/>
<rect x="597" y="142" width="3" height="14" fill="#1ea575"/>
<rect x="600" y="155" width="3" height="13" fill="#1ea575"/>
<rect x="604" y="167" width="3" height="14" fill="#1ea575"/>
<rect x="607" y="180" width="3" height="13" fill="#1ea575"/>
<rect x="611" y="192" width="3" height="13" fill="#1ea575"/>
<rect x="615" y="204" width="3" height="14" fill="#1ea575"/>
<rect x="618" y="217" width="3" height="13" fill="#1ea575"/>
<rect x="622" y="205" width="3" height="25" fill="#e52c57"/>
<rect x="626" y="205" width="3" height="14" fill="#1ea575"/>
<rect x="629" y="218" width="3" height="13" fill="#1ea575"/>
<rect x="633" y="230" width="3" height="14" fill="#1ea575"/>
<rect x="636" y="243" width="3" height="13" fill="#1ea575"/>
<rect x="640" y="255" width="3" height="13" fill="#1ea575"/>
<rect x="644" y="267" width="3" height="14" fill="#1ea575"/>
<rect x="647" y="280" width="3" height="13" fill="#1ea575"/>
<rect x="651" y="292" width="3" height="14" fill="#1ea575"/>
<rect x="655" y="281" width="3" height="25" fill="#e52c57"/>
<rect x="658" y="281" width="3" height="13" fill="#1ea575"/>
<rect x="662" y="293" width="3" height="14" fill="#1ea575"/>
<rect x="666" y="306" width="3" height="13" fill="#1ea575"/>
<rect x="669" y="294" width="3" height="25" fill="#e52c57"/>
<rect x="673" y="271" width="3" height="24" fill="#e52c57"/>
<rect x="676" y="271" width="3" height="13" fill="#1ea575"/>
<rect x="680" y="283" width="3" height="13" fill="#1ea575"/>
<rect x="684" y="295" width="3" height="14" fill="#1ea575"/>
<rect x="687" y="308" width="3" height="13" fill="#1ea575"/>
<rect x="691" y="296" width="3" height="25" fill="#e52c57"/>
<rect x="695" y="296" width="3" height="14" fill="#1ea575"/>
<rect x="698" y="309" width="3" height="13" fill="#1ea575"/>
<rect x="702" y="297" width="3" height="25" fill="#e52c57"/>
<rect x="705" y="297" width="3" height="14" fill="#1ea575"/>
<rect x="709" y="286" width="3" height="25" fill="#e52c57"/>
<rect x="713" y="286" width="3" height="14" fill="#1ea575"/>
<rect x="716" y="299" width="3" height="13" fill="#1ea575"/>
<rect x="720" y="287" width="3" height="25" fill="#e52c57"/>
<rect x="724" y="287" width="3" height="14" fill="#1ea575"/>
<rect x="727" y="276" width="3" height="25" fill="#e52c57"/>
<rect x="731" y="276" width="3" height="13" fill="#1ea575"/>
<rect x="734" y="288" width="3" height="14" fill="#1ea575"/>
<rect x="738" y="301" width="3" height="13" fill="#1ea575"/>
<rect x="742" y="289" width="3" height="25" fill="#e52c57"/>
<rect x="745" y="266" width="3" height="24" fill="#e52c57"/>
<rect x="749" y="242" width="3" height="25" fill="#e52c57"/>
<rect x="753" y="242" width="3" height="13" fill="#1ea575"/>
<rect x="756" y="254" width="3" height="14" fill="#1ea575"/>
<rect x="760" y="267" width="3" height="13" fill="#1ea575"/>
<rect x="763" y="255" width="3" height="25" fill="#e52c57"/>
<rect x="767" y="255" width="3" height="14" fill="#1ea575"/>
<rect x="771" y="244" width="3" height="25" fill="#e52c57"/>
<rect x="774" y="220" width="3" height="25" fill="#e52c57"/>
<rect x="778" y="220" width="3" height="14" fill="#1ea575"/>
<rect x="782" y="233" width="3" height="13" fill="#1ea575"/>
<rect x="785" y="221" width="3" height="25" fill="#e52c57"/>
<rect x="789" y="221" width="3" height="14" fill="#1ea575"/>
<rect x="793" y="234" width="3" height="13" fill="#1ea575"/>
<rect x="796" y="222" width="3" height="25" fill="#e52c57"/>
<rect x="800" y="222" width="3" height="14" fill="#1ea575"/>
<rect x="803" y="211" width="3" height="25" fill="#e52c57"/>
<rect x="807" y="187" width="3" height="25" fill="#e52c57"/>
<rect x="811" y="163" width="3" height="25" fill="#e52c57"/>
<rect x="814" y="140" width="3" height="24" fill="#e52c57"/>
<rect x="818" y="140" width="3" height="13" fill="#1ea575"/>
<rect x="822" y="152" width="3" height="13" fill="#1ea575"/>
<rect x="825" y="164" width="3" height="14" fill="#1ea575"/>
<rect x="829" y="177" width="3" height="13" fill="#1ea575"/>
<rect x="832" y="165" width="3" height="25" fill="#e52c57"/>
<rect x="836" y="165" width="3" height="14" fill="#1ea575"/>
<rect x="840" y="154" width="3" height="25" fill="#e52c57"/>
<rect x="843" y="154" width="3" height="14" fill="#1ea575"/>
<rect x="847" y="167" width="3" height="13" fill="#1ea575"/>
<rect x="851" y="179" width="3" height="13" fill="#1ea575"/>
<rect x="854" y="168" width="3" height="24" fill="#e52c57"/>
<rect x="858" y="144" width="3" height="25" fill="#e52c57"/>
<rect x="861" y="144" width="3" height="13" fill="#1ea575"/>
<rect x="865" y="132" width="3" height="25" fill="#e52c57"/>
<rect x="869" y="109" width="3" height="24" fill="#e52c57"/>
<rect x="872" y="109" width="3" height="13" fill="#1ea575"/>
<rect x="876" y="121" width="3" height="14" fill="#1ea575"/>
<rect x="880" y="134" width="3" height="13" fill="#1ea575"/>
<rect x="883" y="122" width="3" height="25" fill="#e52c57"/>
<rect x="887" y="122" width="3" height="14" fill="#1ea575"/>
<rect x="890" y="135" width="3" height="13" fill="#1ea575"/>
<rect x="894" y="147" width="3" height="13" fill="#1ea575"/>
<rect x="898" y="159" width="3" height="14" fill="#1ea575"/>
<rect x="901" y="172" width="3" height="13" fill="#1ea575"/>
<rect x="905" y="160" width="3" height="25" fill="#e52c57"/>
<rect x="909" y="160" width="3" height="14" fill="#1ea575"/>
<rect x="912" y="149" width="3" height="25" fill="#e52c57"/>
<rect x="916" y="149" width="3" height="13" fill="#1ea575"/>
<rect x="920" y="161" width="3" height="14" fill="#1ea575"/>
<rect x="923" y="174" width="3" height="13" fill="#1ea575"/>
<rect x="927" y="186" width="3" height="14" fill="#1ea575"/>
<rect x="930" y="199" width="3" height="13" fill="#1ea575"/>
<rect x="934" y="187" width="3" height="25" fill="#e52c57"/>
<rect x="938" y="164" width="3" height="24" fill="#e52c57"/>
<rect x="941" y="164" width="3" height="13" fill="#1ea575"/>
<rect x="945" y="176" width="3" height="13" fill="#1ea575"/>
<rect x="949" y="165" width="3" height="24" fill="#e52c57"/>
<rect x="952" y="141" width="3" height="25" fill="#e52c57"/>
<rect x="956" y="117" width="3" height="25" fill="#e52c57"/>
<rect x="959" y="93" width="3" height="25" fill="#e52c57"/>
<rect x="963" y="93" width="3" height="14" fill="#1ea575"/>
<rect x="967" y="106" width="3" height="13" fill="#1ea575"/>
<rect x="970" y="118" width="3" height="14" fill="#1ea575"/>
<rect x="974" y="131" width="3" height="13" fill="#1ea575"/>
<rect x="978" y="143" width="3" height="13" fill="#1ea575"/>
<rect x="981" y="155" width="3" height="14" fill="#1ea575"/>
<rect x="0" y="622" width="990" height="1" fill="#47484c"/>
<rect x="0" y="757" width="990" height="1" fill="#47484c"/>
<rect x="989" y="617" width="1" height="141" fill="#5b5c60"/>
<rect x="990" y="621.8" width="4.5" height="1.4" fill="#050506"/>
<rect x="990" y="756.8" width="4.5" height="1.4" fill="#050506"/>
<rect x="-2" y="682" width="2" height="9" fill="#f03060"/>
<rect x="2" y="677" width="2" height="14" fill="#f03060"/>
<rect x="5" y="672" width="2" height="19" fill="#f03060"/>
<rect x="9" y="671" width="2" height="20" fill="#f03060"/>
<rect x="12" y="673" width="2" height="18" fill="#f03060"/>
<rect x="16" y="677" width="2" height="14" fill="#f03060"/>
<rect x="20" y="681" width="2" height="10" fill="#f03060"/>
<rect x="23" y="686" width="2" height="5" fill="#f03060"/>
<rect x="27" y="690" width="2" height="2" fill="#20ae7e"/>
<rect x="31" y="690" width="2" height="7" fill="#20ae7e"/>
<rect x="34" y="690" width="2" height="6" fill="#20ae7e"/>
<rect x="38" y="690" width="2" height="3" fill="#20ae7e"/>
<rect x="41" y="690" width="2" height="3" fill="#20ae7e"/>
<rect x="45" y="688" width="2" height="3" fill="#f03060"/>
<rect x="49" y="688" width="2" height="3" fill="#f03060"/>
<rect x="52" y="689" width="2" height="2" fill="#f03060"/>
<rect x="56" y="687" width="2" height="4" fill="#f03060"/>
<rect x="60" y="684" width="2" height="7" fill="#f03060"/>
<rect x="63" y="683" width="2" height="8" fill="#f03060"/>
<rect x="67" y="680" width="2" height="11" fill="#f03060"/>
<rect x="70" y="681" width="2" height="10" fill="#f03060"/>
<rect x="74" y="683" width="2" height="8" fill="#f03060"/>
<rect x="78" y="687" width="2" height="4" fill="#f03060"/>
<rect x="81" y="690" width="2" height="2" fill="#20ae7e"/>
<rect x="85" y="690" width="2" height="6" fill="#20ae7e"/>
<rect x="89" y="690" width="2" height="10" fill="#20ae7e"/>
<rect x="92" y="690" width="2" height="9" fill="#20ae7e"/>
<rect x="96" y="690" width="2" height="5" fill="#20ae7e"/>
<rect x="100" y="690" width="2" height="4" fill="#20ae7e"/>
<rect x="103" y="690" width="2" height="1" fill="#20ae7e"/>
<rect x="107" y="689" width="2" height="2" fill="#f03060"/>
<rect x="110" y="686" width="2" height="5" fill="#f03060"/>
<rect x="114" y="682" width="2" height="9" fill="#f03060"/>
<rect x="118" y="677" width="2" height="14" fill="#f03060"/>
<rect x="121" y="676" width="2" height="15" fill="#f03060"/>
<rect x="125" y="677" width="2" height="14" fill="#f03060"/>
<rect x="129" y="677" width="2" height="14" fill="#f03060"/>
<rect x="132" y="679" width="2" height="12" fill="#f03060"/>
<rect x="136" y="682" width="2" height="9" fill="#f03060"/>
<rect x="139" y="682" width="2" height="9" fill="#f03060"/>
<rect x="143" y="680" width="2" height="11" fill="#f03060"/>
<rect x="147" y="681" width="2" height="10" fill="#f03060"/>
<rect x="150" y="680" width="2" height="11" fill="#f03060"/>
<rect x="154" y="681" width="2" height="10" fill="#f03060"/>
<rect x="158" y="684" width="2" height="7" fill="#f03060"/>
<rect x="161" y="684" width="2" height="7" fill="#f03060"/>
<rect x="165" y="682" width="2" height="9" fill="#f03060"/>
<rect x="168" y="679" width="2" height="12" fill="#f03060"/>
<rect x="172" y="679" width="2" height="12" fill="#f03060"/>
<rect x="176" y="682" width="2" height="9" fill="#f03060"/>
<rect x="179" y="686" width="2" height="5" fill="#f03060"/>
<rect x="183" y="690" width="2" height="2" fill="#20ae7e"/>
<rect x="187" y="690" width="2" height="6" fill="#20ae7e"/>
<rect x="190" y="690" width="2" height="11" fill="#20ae7e"/>
<rect x="194" y="690" width="2" height="16" fill="#20ae7e"/>
<rect x="197" y="690" width="2" height="19" fill="#20ae7e"/>
<rect x="201" y="690" width="2" height="23" fill="#20ae7e"/>
<rect x="205" y="690" width="2" height="21" fill="#20ae7e"/>
<rect x="208" y="690" width="2" height="16" fill="#20ae7e"/>
<rect x="212" y="690" width="2" height="14" fill="#20ae7e"/>
<rect x="216" y="690" width="2" height="10" fill="#20ae7e"/>
<rect x="219" y="690" width="2" height="4" fill="#20ae7e"/>
<rect x="223" y="690" width="2" height="2" fill="#20ae7e"/>
<rect x="227" y="690" width="2" height="2" fill="#20ae7e"/>
<rect x="230" y="688" width="2" height="3" fill="#f03060"/>
<rect x="234" y="688" width="2" height="3" fill="#f03060"/>
<rect x="237" y="690" width="2" height="1" fill="#20ae7e"/>
<rect x="241" y="690" width="2" height="4" fill="#20ae7e"/>
<rect x="245" y="690" width="2" height="7" fill="#20ae7e"/>
<rect x="248" y="690" width="2" height="6" fill="#20ae7e"/>
<rect x="252" y="690" width="2" height="7" fill="#20ae7e"/>
<rect x="256" y="690" width="2" height="9" fill="#20ae7e"/>
<rect x="259" y="690" width="2" height="11" fill="#20ae7e"/>
<rect x="263" y="690" width="2" height="13" fill="#20ae7e"/>
<rect x="266" y="690" width="2" height="11" fill="#20ae7e"/>
<rect x="270" y="690" width="2" height="7" fill="#20ae7e"/>
<rect x="274" y="690" width="2" height="1" fill="#20ae7e"/>
<rect x="277" y="688" width="2" height="3" fill="#f03060"/>
<rect x="281" y="684" width="2" height="7" fill="#f03060"/>
<rect x="285" y="683" width="2" height="8" fill="#f03060"/>
<rect x="288" y="684" width="2" height="7" fill="#f03060"/>
<rect x="292" y="687" width="2" height="4" fill="#f03060"/>
<rect x="295" y="690" width="2" height="1" fill="#20ae7e"/>
<rect x="299" y="690" width="2" height="5" fill="#20ae7e"/>
<rect x="303" y="690" width="2" height="9" fill="#20ae7e"/>
<rect x="306" y="690" width="2" height="8" fill="#20ae7e"/>
<rect x="310" y="690" width="2" height="8" fill="#20ae7e"/>
<rect x="314" y="690" width="2" height="10" fill="#20ae7e"/>
<rect x="317" y="690" width="2" height="12" fill="#20ae7e"/>
<rect x="321" y="690" width="2" height="14" fill="#20ae7e"/>
<rect x="324" y="690" width="2" height="16" fill="#20ae7e"/>
<rect x="328" y="690" width="2" height="17" fill="#20ae7e"/>
<rect x="332" y="690" width="2" height="19" fill="#20ae7e"/>
<rect x="335" y="690" width="2" height="16" fill="#20ae7e"/>
<rect x="339" y="690" width="2" height="10" fill="#20ae7e"/>
<rect x="343" y="690" width="2" height="8" fill="#20ae7e"/>
<rect x="346" y="690" width="2" height="2" fill="#20ae7e"/>
<rect x="350" y="689" width="2" height="2" fill="#f03060"/>
<rect x="353" y="685" width="2" height="6" fill="#f03060"/>
<rect x="357" y="683" width="2" height="8" fill="#f03060"/>
<rect x="361" y="680" width="2" height="11" fill="#f03060"/>
<rect x="364" y="679" width="2" height="12" fill="#f03060"/>
<rect x="368" y="681" width="2" height="10" fill="#f03060"/>
<rect x="372" y="684" width="2" height="7" fill="#f03060"/>
<rect x="375" y="683" width="2" height="8" fill="#f03060"/>
<rect x="379" y="680" width="2" height="11" fill="#f03060"/>
<rect x="383" y="675" width="2" height="16" fill="#f03060"/>
<rect x="386" y="674" width="2" height="17" fill="#f03060"/>
<rect x="390" y="672" width="2" height="19" fill="#f03060"/>
<rect x="393" y="669" width="2" height="22" fill="#f03060"/>
<rect x="397" y="669" width="2" height="22" fill="#f03060"/>
<rect x="401" y="672" width="2" height="19" fill="#f03060"/>
<rect x="404" y="672" width="2" height="19" fill="#f03060"/>
<rect x="408" y="675" width="2" height="16" fill="#f03060"/>
<rect x="412" y="679" width="2" height="12" fill="#f03060"/>
<rect x="415" y="683" width="2" height="8" fill="#f03060"/>
<rect x="419" y="684" width="2" height="7" fill="#f03060"/>
<rect x="422" y="682" width="2" height="9" fill="#f03060"/>
<rect x="426" y="679" width="2" height="12" fill="#f03060"/>
<rect x="430" y="679" width="2" height="12" fill="#f03060"/>
<rect x="433" y="682" width="2" height="9" fill="#f03060"/>
<rect x="437" y="681" width="2" height="10" fill="#f03060"/>
<rect x="441" y="679" width="2" height="12" fill="#f03060"/>
<rect x="444" y="680" width="2" height="11" fill="#f03060"/>
<rect x="448" y="683" width="2" height="8" fill="#f03060"/>
<rect x="451" y="683" width="2" height="8" fill="#f03060"/>
<rect x="455" y="685" width="2" height="6" fill="#f03060"/>
<rect x="459" y="688" width="2" height="3" fill="#f03060"/>
<rect x="462" y="690" width="2" height="3" fill="#20ae7e"/>
<rect x="466" y="690" width="2" height="8" fill="#20ae7e"/>
<rect x="470" y="690" width="2" height="12" fill="#20ae7e"/>
<rect x="473" y="690" width="2" height="12" fill="#20ae7e"/>
<rect x="477" y="690" width="2" height="13" fill="#20ae7e"/>
<rect x="480" y="690" width="2" height="10" fill="#20ae7e"/>
<rect x="484" y="690" width="2" height="6" fill="#20ae7e"/>
<rect x="488" y="689" width="2" height="2" fill="#f03060"/>
<rect x="491" y="687" width="2" height="4" fill="#f03060"/>
<rect x="495" y="688" width="2" height="3" fill="#f03060"/>
<rect x="499" y="686" width="2" height="5" fill="#f03060"/>
<rect x="502" y="687" width="2" height="4" fill="#f03060"/>
<rect x="506" y="685" width="2" height="6" fill="#f03060"/>
<rect x="510" y="686" width="2" height="5" fill="#f03060"/>
<rect x="513" y="688" width="2" height="3" fill="#f03060"/>
<rect x="517" y="690" width="2" height="3" fill="#20ae7e"/>
<rect x="520" y="690" width="2" height="7" fill="#20ae7e"/>
<rect x="524" y="690" width="2" height="11" fill="#20ae7e"/>
<rect x="528" y="690" width="2" height="14" fill="#20ae7e"/>
<rect x="531" y="690" width="2" height="18" fill="#20ae7e"/>
<rect x="535" y="690" width="2" height="21" fill="#20ae7e"/>
<rect x="539" y="690" width="2" height="19" fill="#20ae7e"/>
<rect x="542" y="690" width="2" height="14" fill="#20ae7e"/>
<rect x="546" y="690" width="2" height="12" fill="#20ae7e"/>
<rect x="549" y="690" width="2" height="12" fill="#20ae7e"/>
<rect x="553" y="690" width="2" height="8" fill="#20ae7e"/>
<rect x="557" y="690" width="2" height="3" fill="#20ae7e"/>
<rect x="560" y="690" width="2" height="1" fill="#20ae7e"/>
<rect x="564" y="686" width="2" height="5" fill="#f03060"/>
<rect x="568" y="680" width="2" height="11" fill="#f03060"/>
<rect x="571" y="679" width="2" height="12" fill="#f03060"/>
<rect x="575" y="681" width="2" height="10" fill="#f03060"/>
<rect x="578" y="679" width="2" height="12" fill="#f03060"/>
<rect x="582" y="681" width="2" height="10" fill="#f03060"/>
<rect x="586" y="679" width="2" height="12" fill="#f03060"/>
<rect x="589" y="681" width="2" height="10" fill="#f03060"/>
<rect x="593" y="679" width="2" height="12" fill="#f03060"/>
<rect x="597" y="681" width="2" height="10" fill="#f03060"/>
<rect x="600" y="684" width="2" height="7" fill="#f03060"/>
<rect x="604" y="688" width="2" height="3" fill="#f03060"/>
<rect x="607" y="690" width="2" height="3" fill="#20ae7e"/>
<rect x="611" y="690" width="2" height="7" fill="#20ae7e"/>
<rect x="615" y="690" width="2" height="11" fill="#20ae7e"/>
<rect x="618" y="690" width="2" height="15" fill="#20ae7e"/>
<rect x="622" y="690" width="2" height="14" fill="#20ae7e"/>
<rect x="626" y="690" width="2" height="14" fill="#20ae7e"/>
<rect x="629" y="690" width="2" height="15" fill="#20ae7e"/>
<rect x="633" y="690" width="2" height="17" fill="#20ae7e"/>
<rect x="636" y="690" width="2" height="18" fill="#20ae7e"/>
<rect x="640" y="690" width="2" height="20" fill="#20ae7e"/>
<rect x="644" y="690" width="2" height="21" fill="#20ae7e"/>
<rect x="647" y="690" width="2" height="22" fill="#20ae7e"/>
<rect x="651" y="690" width="2" height="23" fill="#20ae7e"/>
<rect x="655" y="690" width="2" height="20" fill="#20ae7e"/>
<rect x="658" y="690" width="2" height="18" fill="#20ae7e"/>
<rect x="662" y="690" width="2" height="17" fill="#20ae7e"/>
<rect x="666" y="690" width="2" height="17" fill="#20ae7e"/>
<rect x="669" y="690" width="2" height="12" fill="#20ae7e"/>
<rect x="673" y="690" width="2" height="6" fill="#20ae7e"/>
<rect x="676" y="690" width="2" height="3" fill="#20ae7e"/>
<rect x="680" y="690" width="2" height="2" fill="#20ae7e"/>
<rect x="684" y="690" width="2" height="2" fill="#20ae7e"/>
<rect x="687" y="690" width="2" height="3" fill="#20ae7e"/>
<rect x="691" y="690" width="2" height="1" fill="#20ae7e"/>
<rect x="695" y="689" width="2" height="2" fill="#f03060"/>
<rect x="698" y="690" width="2" height="1" fill="#20ae7e"/>
<rect x="702" y="687" width="2" height="4" fill="#f03060"/>
<rect x="705" y="687" width="2" height="4" fill="#f03060"/>
<rect x="709" y="683" width="2" height="8" fill="#f03060"/>
<rect x="713" y="683" width="2" height="8" fill="#f03060"/>
<rect x="716" y="684" width="2" height="7" fill="#f03060"/>
<rect x="720" y="681" width="2" height="10" fill="#f03060"/>
<rect x="724" y="682" width="2" height="9" fill="#f03060"/>
<rect x="727" y="679" width="2" height="12" fill="#f03060"/>
<rect x="731" y="679" width="2" height="12" fill="#f03060"/>
<rect x="734" y="681" width="2" height="10" fill="#f03060"/>
<rect x="738" y="684" width="2" height="7" fill="#f03060"/>
<rect x="742" y="683" width="2" height="8" fill="#f03060"/>
<rect x="745" y="680" width="2" height="11" fill="#f03060"/>
<rect x="749" y="675" width="2" height="16" fill="#f03060"/>
<rect x="753" y="674" width="2" height="17" fill="#f03060"/>
<rect x="756" y="676" width="2" height="15" fill="#f03060"/>
<rect x="760" y="679" width="2" height="12" fill="#f03060"/>
<rect x="763" y="679" width="2" height="12" fill="#f03060"/>
<rect x="767" y="680" width="2" height="11" fill="#f03060"/>
<rect x="771" y="679" width="2" height="12" fill="#f03060"/>
<rect x="774" y="676" width="2" height="15" fill="#f03060"/>
<rect x="778" y="676" width="2" height="15" fill="#f03060"/>
<rect x="782" y="679" width="2" height="12" fill="#f03060"/>
<rect x="785" y="678" width="2" height="13" fill="#f03060"/>
<rect x="789" y="680" width="2" height="11" fill="#f03060"/>
<rect x="793" y="683" width="2" height="8" fill="#f03060"/>
<rect x="796" y="683" width="2" height="8" fill="#f03060"/>
<rect x="800" y="685" width="2" height="6" fill="#f03060"/>
<rect x="803" y="683" width="2" height="8" fill="#f03060"/>
<rect x="807" y="680" width="2" height="11" fill="#f03060"/>
<rect x="811" y="676" width="2" height="15" fill="#f03060"/>
<rect x="814" y="672" width="2" height="19" fill="#f03060"/>
<rect x="818" y="672" width="2" height="19" fill="#f03060"/>
<rect x="822" y="674" width="2" height="17" fill="#f03060"/>
<rect x="825" y="679" width="2" height="12" fill="#f03060"/>
<rect x="829" y="684" width="2" height="7" fill="#f03060"/>
<rect x="832" y="685" width="2" height="6" fill="#f03060"/>
<rect x="836" y="688" width="2" height="3" fill="#f03060"/>
<rect x="840" y="687" width="2" height="4" fill="#f03060"/>
<rect x="843" y="689" width="2" height="2" fill="#f03060"/>
<rect x="847" y="690" width="2" height="3" fill="#20ae7e"/>
<rect x="851" y="690" width="2" height="6" fill="#20ae7e"/>
<rect x="854" y="690" width="2" height="6" fill="#20ae7e"/>
<rect x="858" y="690" width="2" height="3" fill="#20ae7e"/>
<rect x="861" y="690" width="2" height="3" fill="#20ae7e"/>
<rect x="865" y="689" width="2" height="2" fill="#f03060"/>
<rect x="869" y="685" width="2" height="6" fill="#f03060"/>
<rect x="872" y="685" width="2" height="6" fill="#f03060"/>
<rect x="876" y="686" width="2" height="5" fill="#f03060"/>
<rect x="880" y="690" width="2" height="1" fill="#20ae7e"/>
<rect x="883" y="689" width="2" height="2" fill="#f03060"/>
<rect x="887" y="690" width="2" height="2" fill="#20ae7e"/>
<rect x="890" y="690" width="2" height="5" fill="#20ae7e"/>
<rect x="894" y="690" width="2" height="8" fill="#20ae7e"/>
<rect x="898" y="690" width="2" height="12" fill="#20ae7e"/>
<rect x="901" y="690" width="2" height="15" fill="#20ae7e"/>
<rect x="905" y="690" width="2" height="14" fill="#20ae7e"/>
<rect x="909" y="690" width="2" height="15" fill="#20ae7e"/>
<rect x="912" y="690" width="2" height="11" fill="#20ae7e"/>
<rect x="916" y="690" width="2" height="11" fill="#20ae7e"/>
<rect x="920" y="690" width="2" height="11" fill="#20ae7e"/>
<rect x="923" y="690" width="2" height="13" fill="#20ae7e"/>
<rect x="927" y="690" width="2" height="15" fill="#20ae7e"/>
<rect x="930" y="690" width="2" height="17" fill="#20ae7e"/>
<rect x="934" y="690" width="2" height="15" fill="#20ae7e"/>
<rect x="938" y="690" width="2" height="10" fill="#20ae7e"/>
<rect x="941" y="690" width="2" height="7" fill="#20ae7e"/>
<rect x="945" y="690" width="2" height="7" fill="#20ae7e"/>
<rect x="949" y="690" width="2" height="4" fill="#20ae7e"/>
<rect x="952" y="688" width="2" height="3" fill="#f03060"/>
<rect x="956" y="682" width="2" height="9" fill="#f03060"/>
<rect x="959" y="676" width="2" height="15" fill="#f03060"/>
<rect x="963" y="674" width="2" height="17" fill="#f03060"/>
<rect x="967" y="676" width="2" height="15" fill="#f03060"/>
<rect x="970" y="679" width="2" height="12" fill="#f03060"/>
<rect x="974" y="683" width="2" height="8" fill="#f03060"/>
<rect x="978" y="688" width="2" height="3" fill="#f03060"/>
<rect x="981" y="690" width="2" height="3" fill="#20ae7e"/>
<polyline points="-0.7,698.77 2.9,695.72 6.6,691.40 10.2,686.89 13.8,682.86 17.5,679.74 21.1,677.74 24.7,676.94 28.3,677.34 32.0,678.87 35.6,680.34 39.2,681.02 42.9,681.55 46.5,681.27 50.1,680.89 53.7,680.86 57.4,680.36 61.0,678.90 64.6,677.32 68.3,675.07 71.9,672.91 75.5,671.34 79.1,670.62 82.8,670.90 86.4,672.19 90.0,674.47 93.7,676.57 97.3,677.77 100.9,678.74 104.5,678.84 108.2,678.78 111.8,677.94 115.4,675.97 119.1,672.73 122.7,669.27 126.3,666.26 129.9,663.05 133.6,660.31 137.2,658.44 140.8,656.58 144.5,654.19 148.1,652.05 151.7,649.56 155.3,647.43 159.0,646.12 162.6,644.77 166.2,642.87 169.8,640.12 173.5,637.47 177.1,635.51 180.7,634.57 184.4,634.83 188.0,636.31 191.6,638.97 195.2,642.72 198.9,647.44 202.5,652.97 206.1,658.11 209.8,662.10 213.4,665.58 217.0,667.92 220.6,668.76 224.3,669.03 227.9,669.36 231.5,669.03 235.2,668.73 238.8,668.89 242.4,669.74 246.0,671.39 249.7,672.79 253.3,674.38 256.9,676.40 260.6,678.99 264.2,682.19 267.8,684.91 271.4,686.51 275.1,686.61 278.7,686.14 282.3,684.65 286.0,682.97 289.6,681.65 293.2,681.01 296.8,681.22 300.5,682.34 304.1,684.36 307.7,686.15 311.4,688.07 315.0,690.35 318.6,693.10 322.2,696.37 325.9,700.15 329.5,704.39 333.1,709.03 336.8,712.94 340.4,715.42 344.0,717.18 347.6,717.64 351.3,717.55 354.9,716.37 358.5,714.86 362.1,712.47 365.8,709.96 369.4,707.85 373.0,706.41 376.7,704.73 380.3,702.24 383.9,698.65 387.5,694.90 391.2,690.52 394.8,685.28 398.4,680.15 402.1,675.75 405.7,671.36 409.3,667.62 412.9,664.91 416.6,663.41 420.2,662.09 423.8,660.33 427.5,657.73 431.1,655.18 434.7,653.26 438.3,651.19 442.0,648.54 445.6,646.11 449.2,644.42 452.9,642.69 456.5,641.48 460.1,641.16 463.7,641.89 467.4,643.71 471.0,646.60 474.6,649.40 478.3,652.46 481.9,654.90 485.5,656.20 489.1,656.07 492.8,655.52 496.4,655.17 500.0,654.34 503.7,653.70 507.3,652.59 510.9,651.69 514.5,651.44 518.2,652.06 521.8,653.65 525.4,656.22 529.1,659.71 532.7,664.03 536.3,669.08 539.9,673.66 543.6,677.04 547.2,679.88 550.8,682.63 554.4,684.49 558.1,684.99 561.7,685.01 565.3,684.02 569.0,681.75 572.6,679.20 576.2,676.99 579.8,674.44 583.5,672.20 587.1,669.62 590.7,667.38 594.4,664.80 598.0,662.58 601.6,661.13 605.2,660.68 608.9,661.30 612.5,663.01 616.1,665.74 619.8,669.39 623.4,672.76 627.0,676.19 630.6,679.88 634.3,683.94 637.9,688.38 641.5,693.22 645.2,698.41 648.8,703.90 652.4,709.62 656.0,714.45 659.7,718.76 663.3,722.84 666.9,726.85 670.6,729.81 674.2,731.16 677.8,731.71 681.4,732.01 685.1,732.40 688.7,733.10 692.3,733.15 696.0,733.07 699.6,733.18 703.2,732.59 706.8,731.88 710.5,730.31 714.1,728.58 717.7,727.11 721.4,725.09 725.0,723.12 728.6,720.50 732.2,717.92 735.9,715.79 739.5,714.38 743.1,712.72 746.7,710.24 750.4,706.61 754.0,702.80 757.6,699.40 761.3,696.79 764.9,694.09 768.5,691.83 772.1,689.26 775.8,685.92 779.4,682.65 783.0,679.99 786.7,677.15 790.3,674.76 793.9,673.18 797.5,671.51 801.2,670.30 804.8,668.76 808.4,666.45 812.1,663.12 815.7,658.68 819.3,654.21 822.9,650.42 826.6,647.70 830.2,646.27 833.8,645.11 837.5,644.65 841.1,644.06 844.7,643.88 848.3,644.45 852.0,645.92 855.6,647.29 859.2,647.90 862.9,648.47 866.5,648.38 870.1,647.26 873.7,646.02 877.4,645.25 881.0,645.27 884.6,645.19 888.3,645.52 891.9,646.56 895.5,648.46 899.1,651.26 902.8,654.94 906.4,658.35 910.0,661.85 913.6,664.58 917.3,667.12 920.9,669.82 924.5,672.89 928.2,676.45 931.8,680.53 935.4,684.03 939.0,686.29 942.7,688.04 946.3,689.74 949.9,690.63 953.6,690.24 957.2,688.36 960.8,684.95 964.4,681.14 968.1,677.67 971.7,674.98 975.3,673.34 979.0,672.84 982.6,673.49" fill="none" stroke="#8a3f70" stroke-width="1.15" stroke-linejoin="round" stroke-linecap="round" opacity="1"/>
<polyline points="-0.7,691.03 2.9,683.50 6.6,674.14 10.2,668.83 13.8,666.76 17.5,667.24 21.1,669.73 24.7,673.76 28.3,678.95 32.0,684.99 35.6,686.24 39.2,683.72 42.9,683.67 46.5,680.16 50.1,679.37 53.7,680.72 57.4,678.35 61.0,673.08 64.6,671.00 68.3,666.04 71.9,664.28 75.5,665.04 79.1,667.77 82.8,672.00 86.4,677.38 90.0,683.57 93.7,684.97 97.3,682.58 100.9,682.64 104.5,679.23 108.2,678.53 111.8,674.57 115.4,668.11 119.1,659.76 122.7,655.41 126.3,654.24 129.9,650.20 133.6,649.33 137.2,650.96 140.8,649.15 144.5,644.65 148.1,643.49 151.7,639.58 155.3,638.93 159.0,640.86 162.6,639.38 166.2,635.27 169.8,629.13 173.5,626.87 177.1,627.66 180.7,630.83 184.4,635.84 188.0,642.23 191.6,649.63 195.2,657.73 198.9,666.29 202.5,675.12 206.1,678.67 209.8,678.04 213.4,679.53 217.0,677.27 220.6,672.12 224.3,670.13 227.9,670.64 231.5,667.73 235.2,667.55 238.8,669.51 242.4,673.12 246.0,678.00 249.7,678.41 253.3,680.72 256.9,684.48 260.6,689.33 264.2,694.99 267.8,695.83 271.4,692.88 275.1,687.00 278.7,684.28 282.3,678.67 286.0,676.25 289.6,676.36 293.2,678.45 296.8,682.06 300.5,686.83 304.1,692.45 307.7,693.29 311.4,695.76 315.0,699.47 318.6,704.12 322.2,709.44 325.9,715.24 329.5,721.35 333.1,727.62 336.8,728.56 340.4,725.33 344.0,724.24 347.6,719.46 351.3,717.22 354.9,711.62 358.5,708.84 362.1,702.90 365.8,699.95 369.4,699.37 373.0,700.66 376.7,698.01 380.3,692.30 383.9,684.27 387.5,679.89 391.2,673.03 394.8,664.31 398.4,659.63 402.1,658.14 405.7,653.81 409.3,652.67 412.9,654.06 416.6,657.39 420.2,656.84 423.8,653.25 427.5,647.32 431.1,645.01 434.7,645.55 438.3,642.95 442.0,637.91 445.6,636.40 449.2,637.68 452.9,635.73 456.5,636.68 460.1,639.87 463.7,644.79 467.4,651.01 471.0,658.17 474.6,660.61 478.3,664.70 481.9,664.65 485.5,661.37 489.1,655.59 492.8,653.29 496.4,653.76 500.0,651.01 503.7,651.14 507.3,648.15 510.9,648.13 514.5,650.43 518.2,654.54 521.8,660.01 525.4,666.48 529.1,673.67 532.7,681.33 536.3,689.28 539.9,691.98 543.6,690.53 547.2,691.24 550.8,693.63 554.4,691.92 558.1,687.02 561.7,685.07 565.3,680.05 569.0,672.70 572.6,668.98 576.2,668.16 579.8,664.22 583.5,663.28 587.1,659.31 590.7,658.39 594.4,654.50 598.0,653.70 601.6,655.33 605.2,658.85 608.9,663.81 612.5,669.85 616.1,676.65 619.8,683.98 623.4,686.25 627.0,689.92 630.6,694.65 634.3,700.14 637.9,706.18 641.5,712.57 645.2,719.17 648.8,725.85 652.4,732.53 656.0,733.73 659.7,736.03 663.3,739.15 666.9,742.88 670.6,741.66 674.2,736.58 677.8,733.92 681.4,733.18 685.1,733.95 688.7,735.90 692.3,733.37 696.0,732.74 699.6,733.61 703.2,730.25 706.8,729.01 710.5,724.06 714.1,721.63 717.7,721.22 721.4,717.01 725.0,715.24 728.6,710.03 732.2,707.57 735.9,707.29 739.5,708.72 743.1,706.09 746.7,700.31 750.4,692.12 754.0,687.53 757.6,685.81 761.3,686.35 764.9,683.29 768.5,682.81 772.1,678.97 775.8,672.56 779.4,669.58 783.0,669.32 786.7,665.82 790.3,665.20 793.9,666.84 797.5,664.86 801.2,665.43 804.8,662.63 808.4,657.20 812.1,649.79 815.7,640.90 819.3,636.35 822.9,635.23 826.6,636.83 830.2,640.54 833.8,640.47 837.5,642.83 841.1,641.67 844.7,643.17 848.3,646.72 852.0,651.84 855.6,652.75 859.2,650.35 862.9,650.77 866.5,648.00 870.1,642.78 873.7,641.07 877.4,642.14 881.0,645.37 884.6,644.87 888.3,646.84 891.9,650.72 895.5,656.06 899.1,662.47 902.8,669.66 906.4,671.98 910.0,675.85 913.6,675.51 917.3,677.26 920.9,680.61 924.5,685.20 928.2,690.69 931.8,696.84 935.4,698.04 939.0,695.34 942.7,695.02 946.3,696.56 949.9,694.15 953.6,688.68 957.2,680.87 960.8,671.32 964.4,665.89 968.1,663.77 971.7,664.24 975.3,666.76 979.0,670.84 982.6,676.11" fill="none" stroke="#c9ab80" stroke-width="1.15" stroke-linejoin="round" stroke-linecap="round" opacity="1"/>
<rect x="0" y="807" width="990" height="1" fill="#47484c"/>
<rect x="0" y="942" width="990" height="1" fill="#47484c"/>
<rect x="989" y="802" width="1" height="141" fill="#5b5c60"/>
<rect x="990" y="806.8" width="4.5" height="1.4" fill="#050506"/>
<rect x="990" y="941.8" width="4.5" height="1.4" fill="#050506"/>
<polyline points="-0.7,912.85 2.9,915.62 6.6,918.07 10.2,919.26 13.8,913.56 17.5,908.05 21.1,902.71 24.7,897.56 28.3,892.60 32.0,887.83 35.6,893.41 39.2,898.27 42.9,900.59 46.5,904.69 50.1,906.65 53.7,901.30 57.4,905.36 61.0,908.91 64.6,910.62 68.3,913.64 71.9,915.10 75.5,909.43 79.1,903.96 82.8,898.68 86.4,893.60 90.0,888.73 93.7,894.27 97.3,899.08 100.9,901.38 104.5,905.42 108.2,907.36 111.8,910.78 115.4,913.77 119.1,916.42 122.7,917.70 126.3,912.04 129.9,914.90 133.6,916.27 137.2,910.60 140.8,913.64 144.5,916.31 148.1,917.61 151.7,919.91 155.3,921.02 159.0,915.16 162.6,917.73 166.2,920.00 169.8,922.02 173.5,922.99 177.1,917.19 180.7,911.55 184.4,906.09 188.0,900.81 191.6,895.73 195.2,890.83 198.9,886.13 202.5,881.62 206.1,887.97 209.8,893.47 213.4,896.09 217.0,900.70 220.6,904.73 224.3,906.67 227.9,901.38 231.5,905.39 235.2,907.31 238.8,901.94 242.4,896.76 246.0,891.79 249.7,896.94 253.3,899.40 256.9,894.27 260.6,889.35 264.2,884.64 267.8,890.69 271.4,895.93 275.1,900.50 278.7,902.69 282.3,906.55 286.0,908.40 289.6,903.00 293.2,897.78 296.8,892.77 300.5,887.95 304.1,883.33 307.7,889.51 311.4,892.44 315.0,887.59 318.6,882.95 322.2,878.51 325.9,874.28 329.5,870.25 333.1,866.41 336.8,874.82 340.4,882.00 344.0,885.40 347.6,891.32 351.3,894.14 354.9,899.07 358.5,901.41 362.1,905.53 365.8,907.49 369.4,901.98 373.0,896.68 376.7,901.36 380.3,905.42 383.9,908.98 387.5,910.69 391.2,913.72 394.8,916.38 398.4,917.67 402.1,911.98 405.7,914.86 409.3,916.25 412.9,910.55 416.6,905.03 420.2,908.69 423.8,911.90 427.5,914.73 431.1,916.09 434.7,910.50 438.3,913.51 442.0,916.17 445.6,917.46 449.2,911.83 452.9,914.70 456.5,916.09 460.1,910.43 463.7,904.96 467.4,899.68 471.0,894.60 474.6,899.42 478.3,901.72 481.9,905.76 485.5,909.29 489.1,912.40 492.8,913.90 496.4,908.37 500.0,911.61 503.7,913.18 507.3,915.94 510.9,917.28 514.5,911.51 518.2,905.95 521.8,900.58 525.4,895.41 529.1,890.45 532.7,885.69 536.3,881.14 539.9,887.63 543.6,893.23 547.2,895.89 550.8,890.95 554.4,896.20 558.1,900.78 561.7,902.97 565.3,906.82 569.0,910.21 572.6,911.84 576.2,906.35 579.8,909.82 583.5,911.49 587.1,914.45 590.7,915.87 594.4,918.38 598.0,919.59 601.6,913.70 605.2,908.00 608.9,902.51 612.5,897.23 616.1,892.16 619.8,887.29 623.4,893.06 627.0,895.79 630.6,890.75 634.3,885.92 637.9,881.31 641.5,876.91 645.2,872.72 648.8,868.73 652.4,864.95 656.0,873.60 659.7,877.66 663.3,873.41 666.9,869.38 670.6,877.47 674.2,884.38 677.8,887.65 681.4,883.00 685.1,878.56 688.7,874.32 692.3,881.69 696.0,885.17 699.6,880.60 703.2,887.21 706.8,890.34 710.5,895.78 714.1,898.36 717.7,893.17 721.4,898.29 725.0,900.73 728.6,904.98 732.2,907.00 735.9,901.44 739.5,896.10 743.1,900.89 746.7,905.05 750.4,908.68 754.0,910.42 757.6,904.91 761.3,899.59 764.9,903.86 768.5,905.91 772.1,909.50 775.8,912.65 779.4,914.17 783.0,908.52 786.7,911.80 790.3,913.38 793.9,907.71 797.5,911.11 801.2,912.74 804.8,915.61 808.4,918.13 812.1,920.35 815.7,922.33 819.3,923.29 822.9,917.48 826.6,911.84 830.2,906.38 833.8,909.84 837.5,911.50 841.1,914.44 844.7,915.86 848.3,910.15 852.0,904.63 855.6,908.34 859.2,911.60 862.9,913.16 866.5,915.94 870.1,918.38 873.7,919.56 877.4,913.80 881.0,908.22 884.6,911.51 888.3,913.09 891.9,907.48 895.5,902.06 899.1,896.85 902.8,891.83 906.4,897.01 910.0,899.48 913.6,903.80 917.3,905.86 920.9,900.43 924.5,895.20 928.2,890.19 931.8,885.40 935.4,891.41 939.0,896.61 942.7,899.08 946.3,893.97 949.9,898.91 953.6,903.20 957.2,906.96 960.8,910.27 964.4,911.87 968.1,906.47 971.7,901.24 975.3,896.19 979.0,891.32 982.6,886.64" fill="none" stroke="#1f9f75" stroke-width="1.15" stroke-linejoin="round" stroke-linecap="round" opacity="1"/>
<polyline points="-0.7,901.17 2.9,892.22 6.6,884.31 10.2,887.17 13.8,889.95 17.5,892.65 21.1,895.25 24.7,897.77 28.3,900.19 32.0,902.52 35.6,899.94 39.2,890.65 42.9,893.38 46.5,891.81 50.1,894.45 53.7,897.01 57.4,895.06 61.0,886.52 64.6,889.39 68.3,888.24 71.9,891.01 75.5,893.68 79.1,896.26 82.8,898.75 86.4,901.15 90.0,903.45 93.7,900.74 97.3,891.30 100.9,894.02 104.5,892.37 108.2,895.00 111.8,893.28 115.4,885.00 119.1,877.69 122.7,880.91 126.3,884.03 129.9,883.41 133.6,886.39 137.2,889.28 140.8,888.14 144.5,880.48 148.1,883.58 151.7,883.00 155.3,885.97 159.0,888.85 162.6,887.76 166.2,880.20 169.8,873.50 173.5,876.86 177.1,880.12 180.7,883.28 184.4,886.35 188.0,889.31 191.6,892.17 195.2,894.92 198.9,897.56 202.5,900.09 206.1,897.71 209.8,888.49 213.4,891.38 217.0,889.99 220.6,881.89 224.3,885.02 227.9,888.04 231.5,887.00 235.2,889.89 238.8,892.68 242.4,895.36 246.0,897.95 249.7,895.85 253.3,898.37 256.9,900.79 260.6,903.11 264.2,905.34 267.8,902.40 271.4,892.65 275.1,884.17 278.7,887.22 282.3,886.26 286.0,889.18 289.6,891.99 293.2,894.71 296.8,897.32 300.5,899.83 304.1,902.24 307.7,899.63 311.4,902.00 315.0,904.27 318.6,906.44 322.2,908.52 325.9,910.50 329.5,912.39 333.1,914.18 336.8,910.10 340.4,899.08 344.0,901.52 347.6,899.00 351.3,901.39 354.9,898.93 358.5,901.28 362.1,898.87 365.8,901.20 369.4,903.44 373.0,905.59 376.7,902.69 380.3,893.11 383.9,884.74 387.5,887.71 391.2,886.72 394.8,879.21 398.4,882.37 402.1,885.43 405.7,884.67 409.3,887.60 412.9,890.44 416.6,893.19 420.2,891.63 423.8,883.48 427.5,876.30 431.1,879.59 434.7,882.79 438.3,882.28 442.0,875.26 445.6,878.58 449.2,881.82 452.9,881.40 456.5,884.48 460.1,887.46 463.7,890.35 467.4,893.13 471.0,895.81 474.6,893.95 478.3,896.55 481.9,894.63 485.5,886.09 489.1,878.57 492.8,881.79 496.4,884.91 500.0,884.19 503.7,887.17 507.3,886.24 510.9,889.09 514.5,891.86 518.2,894.53 521.8,897.10 525.4,899.58 529.1,901.96 532.7,904.25 536.3,906.43 539.9,903.34 543.6,893.42 547.2,896.08 550.8,898.64 554.4,896.46 558.1,887.53 561.7,890.42 565.3,889.14 569.0,881.25 572.6,884.36 576.2,887.38 579.8,886.41 583.5,889.30 587.1,888.16 590.7,890.94 594.4,889.64 598.0,892.33 601.6,894.93 605.2,897.44 608.9,899.86 612.5,902.20 616.1,904.43 619.8,906.58 623.4,903.51 627.0,905.66 630.6,907.73 634.3,909.70 637.9,911.59 641.5,913.39 645.2,915.11 648.8,916.74 652.4,918.29 656.0,913.71 659.7,915.39 663.3,916.98 666.9,918.51 670.6,913.93 674.2,902.48 677.8,904.72 681.4,906.87 685.1,908.93 688.7,910.89 692.3,907.25 696.0,909.25 699.6,911.17 703.2,907.54 706.8,909.51 710.5,906.13 714.1,908.14 717.7,910.06 721.4,906.65 725.0,908.61 728.6,905.41 732.2,907.41 735.9,909.34 739.5,911.18 743.1,907.66 746.7,897.48 750.4,888.59 754.0,891.39 757.6,894.09 761.3,896.69 764.9,894.76 768.5,897.29 772.1,895.32 775.8,886.76 779.4,889.61 783.0,892.37 786.7,890.91 790.3,893.58 793.9,896.16 797.5,894.31 801.2,896.83 804.8,894.93 808.4,886.53 812.1,879.11 815.7,872.52 819.3,875.92 822.9,879.22 826.6,882.42 830.2,885.53 833.8,884.75 837.5,887.71 841.1,886.72 844.7,889.57 848.3,892.32 852.0,894.98 855.6,893.24 859.2,884.90 862.9,887.84 866.5,886.85 870.1,879.36 873.7,882.49 877.4,885.54 881.0,888.49 884.6,887.42 888.3,890.25 891.9,892.99 895.5,895.63 899.1,898.17 902.8,900.62 906.4,898.23 910.0,900.63 913.6,898.28 917.3,900.64 920.9,902.92 924.5,905.10 928.2,907.20 931.8,909.20 935.4,905.83 939.0,895.68 942.7,898.21 946.3,900.64 949.9,898.26 953.6,889.17 957.2,881.21 960.8,874.19 964.4,877.61 968.1,880.93 971.7,884.14 975.3,887.24 979.0,890.23 982.6,893.10" fill="none" stroke="#d42e56" stroke-width="1.15" stroke-linejoin="round" stroke-linecap="round" opacity="1"/>
<polyline points="-0.7,923.53 2.9,921.89 6.6,919.34 10.2,916.97 13.8,915.93 17.5,916.01 21.1,917.03 24.7,918.79 28.3,919.64 32.0,919.73 35.6,920.62 39.2,921.38 42.9,922.08 46.5,922.08 50.1,922.09 53.7,923.03 57.4,923.19 61.0,922.10 64.6,921.08 68.3,919.59 71.9,918.21 75.5,918.03 79.1,918.86 82.8,920.50 86.4,921.22 90.0,921.16 93.7,921.95 97.3,922.58 100.9,923.17 104.5,923.05 108.2,922.95 111.8,922.20 115.4,920.36 119.1,917.75 122.7,915.33 126.3,914.16 129.9,912.61 133.6,911.16 137.2,910.92 140.8,910.15 144.5,908.46 148.1,906.90 151.7,905.01 155.3,903.27 159.0,902.86 162.6,901.98 166.2,900.26 169.8,897.95 173.5,895.81 177.1,894.99 180.7,895.29 184.4,896.55 188.0,898.61 191.6,901.35 195.2,903.86 198.9,905.48 202.5,906.35 206.1,907.94 209.8,909.90 213.4,911.72 217.0,912.78 220.6,912.60 224.3,912.44 227.9,913.19 231.5,913.32 235.2,913.43 238.8,914.47 242.4,916.29 246.0,917.50 249.7,919.13 253.3,920.65 256.9,921.47 260.6,921.48 264.2,920.83 267.8,921.10 271.4,922.26 275.1,922.08 278.7,921.92 282.3,921.21 286.0,920.55 289.6,920.89 293.2,922.07 296.8,923.03 300.5,923.19 304.1,922.68 307.7,923.03 311.4,923.36 315.0,922.95 318.6,921.91 322.2,920.36 325.9,918.39 329.5,916.07 333.1,913.46 336.8,912.07 340.4,912.61 344.0,913.10 347.6,914.38 351.3,915.56 354.9,917.43 358.5,919.17 362.1,920.00 365.8,920.76 369.4,922.10 373.0,922.47 376.7,923.71 380.3,923.62 383.9,922.35 387.5,921.16 391.2,919.53 394.8,917.08 398.4,914.81 402.1,913.80 405.7,912.36 409.3,911.03 412.9,910.91 416.6,911.80 420.2,911.99 423.8,911.04 427.5,909.27 431.1,907.62 434.7,907.13 438.3,906.21 442.0,904.50 445.6,902.92 449.2,902.51 452.9,901.67 456.5,900.90 460.1,901.26 463.7,902.58 467.4,904.71 471.0,907.25 474.6,909.15 478.3,910.91 481.9,911.85 485.5,911.48 489.1,910.15 492.8,908.92 496.4,908.79 500.0,908.16 503.7,907.58 507.3,906.54 510.9,905.57 514.5,905.82 518.2,907.09 521.8,909.19 525.4,911.09 529.1,912.08 532.7,912.32 536.3,911.91 539.9,912.43 543.6,914.52 547.2,916.46 550.8,917.50 554.4,919.23 558.1,919.52 561.7,919.79 565.3,919.44 569.0,918.03 572.6,916.73 576.2,916.51 579.8,915.76 583.5,915.06 587.1,913.87 590.7,912.76 594.4,911.20 598.0,909.76 601.6,909.66 605.2,910.67 608.9,912.60 612.5,914.13 616.1,914.77 619.8,914.65 623.4,915.45 627.0,916.19 630.6,916.12 634.3,915.38 637.9,914.07 641.5,912.31 645.2,910.18 648.8,907.76 652.4,905.10 656.0,903.73 659.7,902.47 663.3,900.80 666.9,898.82 670.6,898.10 674.2,899.44 677.8,900.69 681.4,901.19 685.1,901.07 688.7,900.43 692.3,900.80 696.0,901.15 699.6,900.88 703.2,901.62 706.8,902.30 710.5,903.92 714.1,905.43 717.7,906.02 721.4,907.57 725.0,909.01 728.6,911.31 732.2,913.45 735.9,914.45 739.5,914.52 743.1,915.62 746.7,916.61 750.4,916.19 754.0,915.80 757.6,916.44 761.3,917.95 764.9,918.64 768.5,919.28 772.1,919.17 775.8,917.85 779.4,916.63 783.0,916.57 786.7,915.91 790.3,915.29 793.9,915.81 797.5,915.62 801.2,915.44 804.8,914.63 808.4,912.74 812.1,910.13 815.7,907.01 819.3,904.13 822.9,902.60 826.6,902.26 830.2,902.91 833.8,903.00 837.5,903.08 841.1,902.63 844.7,902.22 848.3,902.95 852.0,904.64 855.6,905.54 859.2,905.20 862.9,904.89 866.5,904.08 870.1,902.43 873.7,900.89 877.4,900.61 881.0,901.39 884.6,901.56 888.3,901.72 891.9,902.92 895.5,904.99 899.1,907.49 902.8,909.03 906.4,911.26 910.0,913.32 913.6,914.72 917.3,916.02 920.9,917.58 924.5,918.18 928.2,917.99 931.8,917.13 935.4,917.31 939.0,918.97 942.7,920.52 946.3,921.34 949.9,922.74 953.6,922.64 957.2,921.43 960.8,919.40 964.4,917.52 968.1,916.72 971.7,916.86 975.3,917.79 979.0,919.42 982.6,920.44" fill="none" stroke="#ececec" stroke-width="1.3" stroke-linejoin="round" stroke-linecap="round" opacity="1"/>
<circle cx="919" cy="47.5" r="6.7" fill="#c4c5c9"/>
<circle cx="941" cy="47.5" r="6.7" fill="#c4c5c9"/>
<circle cx="963" cy="47.5" r="6.7" fill="#c4c5c9"/>
<circle cx="985" cy="47.5" r="6.7" fill="#c4c5c9"/>
<g transform="translate(919,47.5) rotate(45)"><path d="M-1.6,-5 L1.6,-5 L1.6,2.6 L0,5.2 L-1.6,2.6 Z" fill="#37383c"/><rect x="-1.6" y="-3.6" width="3.2" height="0.7" fill="#c4c5c9"/></g>
<path d="M936.2,47.3 L940.6,43.7 L940.6,45.9 C944,45.9 946,48.1 946.2,51.3 C944.8,49.3 943.4,48.7 940.6,48.7 L940.6,50.9 Z" fill="#37383c"/>
<path d="M963,43.5 L967.2,47.9 L964.8,47.9 L964.8,51.7 L961.2,51.7 L961.2,47.9 L958.8,47.9 Z" fill="#37383c"/>
<path d="M985,51.5 L989.2,47.1 L986.8,47.1 L986.8,43.3 L983.2,43.3 L983.2,47.1 L980.8,47.1 Z" fill="#37383c"/>
<polygon points="1000.25,47.5 1003.625,41.85 1010.375,41.85 1013.75,47.5 1010.375,53.15 1003.625,53.15" fill="#c4c5c9" stroke="#c4c5c9" stroke-width="1" stroke-linejoin="round"/><circle cx="1007" cy="47.5" r="2.9" fill="#37383c"/>
<polygon points="978.25,603.4 981.625,597.75 988.375,597.75 991.75,603.4 988.375,609.05 981.625,609.05" fill="#c4c5c9" stroke="#c4c5c9" stroke-width="1" stroke-linejoin="round"/><circle cx="985" cy="603.4" r="2.9" fill="#333438"/>
<g transform="translate(961.9,605.1) rotate(45) scale(1.15)" fill="#c4c5c9"><rect x="-2.5" y="-6.5" width="5" height="5.6" rx="0.6"/><rect x="-4.5" y="-1.5" width="9" height="1.9" rx="0.6"/><path d="M-1,0.3 L1,0.3 L0.2,6 L-0.2,6 Z"/></g>
<path d="M1002.4,598.9 L1011.7,608.1999999999999 M1011.7,598.9 L1002.4,608.1999999999999" stroke="#cfd0d4" stroke-width="1.2" fill="none"/>
<polygon points="978.25,788.4 981.625,782.75 988.375,782.75 991.75,788.4 988.375,794.05 981.625,794.05" fill="#c4c5c9" stroke="#c4c5c9" stroke-width="1" stroke-linejoin="round"/><circle cx="985" cy="788.4" r="2.9" fill="#333438"/>
<g transform="translate(961.9,790.1) rotate(45) scale(1.15)" fill="#c4c5c9"><rect x="-2.5" y="-6.5" width="5" height="5.6" rx="0.6"/><rect x="-4.5" y="-1.5" width="9" height="1.9" rx="0.6"/><path d="M-1,0.3 L1,0.3 L0.2,6 L-0.2,6 Z"/></g>
<path d="M1002.4,783.9 L1011.7,793.1999999999999 M1011.7,783.9 L1002.4,793.1999999999999" stroke="#cfd0d4" stroke-width="1.2" fill="none"/>
<path d="M1032.6,511.4 L1041.2,518.2 L1032.6,525" stroke="#a2a3a7" stroke-width="2.6" fill="none"/>
<rect x="318" y="-12" width="24.2" height="19.4" rx="2.5" fill="#d9142b"/><ellipse cx="330.1" cy="-1.6" rx="9.2" ry="7" fill="none" stroke="#fff" stroke-width="1.2"/>
</svg>
</body></html>
